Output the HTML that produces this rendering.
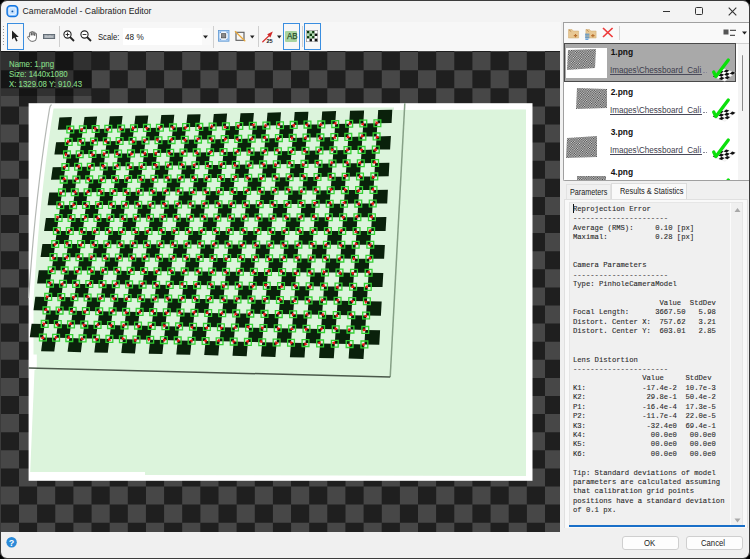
<!DOCTYPE html>
<html><head><meta charset="utf-8">
<style>
*{box-sizing:border-box}
html,body{margin:0;padding:0;width:750px;height:559px;overflow:hidden;background:#000}
body{position:relative;font-family:"Liberation Sans",sans-serif;font-size:12px;color:#1a1a1a}
.win{position:absolute;left:0;top:0;width:750px;height:559px;background:#f0f0f0;border:1px solid #3b3b3b;border-radius:7px;overflow:hidden}
.abs{position:absolute}
.title{position:absolute;left:0;top:0;width:748px;height:22px;background:#f3f3f3}
.tbar{position:absolute;left:1px;top:22px;width:560px;height:29px;background:#f7f7f7}
.sep{position:absolute;width:1px;background:#cfcfcf}
.selbtn{position:absolute;border:1px solid #3a8ee0}
.panel{position:absolute;left:562.8px;top:21.5px;width:186.5px;height:159.3px;border:1px solid #a0a0a0;border-right:none;border-bottom-left-radius:2px;background:#f0f0f0}
.report{position:absolute;left:572.9px;top:204.8px;margin:0;font-family:"Liberation Mono",monospace;font-size:7.22px;line-height:9.42px;color:#2a2a2a;white-space:pre;-webkit-text-stroke:0.1px #2a2a2a}
.btn{position:absolute;top:535.6px;height:14px;border:1px solid #cfcfcf;border-radius:3px;background:#fdfdfd}
</style></head><body>

<div class="win"><div class="title"></div></div>
<svg class="abs" style="left:5px;top:4px" width="14" height="14"><rect x="2.1" y="1.75" width="10.6" height="10.8" rx="3.4" fill="#a6d0ff" stroke="#1476e0" stroke-width="1.5"/><rect x="4" y="3.7" width="6.8" height="6.8" rx="1.6" fill="#c6e2ff" stroke="#eef7ff" stroke-width="0.9"/><circle cx="7.4" cy="7.4" r="0.95" fill="#0a4fa0"/></svg>
<div class="abs" style="left:22.60px;top:5.93px;font-family:'Liberation Sans';font-size:8.70px;line-height:normal;font-weight:normal;color:#1c1c1c;white-space:pre;">CameraModel - Calibration Editor</div>
<div class="abs" style="left:663px;top:10.6px;width:7.3px;height:1.1px;background:#333"></div>
<div class="abs" style="left:695px;top:7.2px;width:7.8px;height:7.6px;border:1.1px solid #333;border-radius:1.5px"></div>
<svg class="abs" style="left:728px;top:6.5px" width="9" height="9"><path d="M0.7 0.7L8.3 8.3M8.3 0.7L0.7 8.3" stroke="#333" stroke-width="1.1"/></svg>

<div class="tbar"></div>
<svg class="abs" style="left:2px;top:25px" width="4" height="24"><g fill="#9a9a9a"><rect x="1" y="1" width="1" height="1"/><rect x="1" y="4" width="1" height="1"/><rect x="1" y="7" width="1" height="1"/><rect x="1" y="10" width="1" height="1"/><rect x="1" y="13" width="1" height="1"/><rect x="1" y="16" width="1" height="1"/><rect x="1" y="19" width="1" height="1"/></g></svg>
<div class="selbtn" style="left:7px;top:23px;width:17px;height:27px"></div>
<svg class="abs" style="left:11px;top:30px" width="9" height="12"><path d="M1 0.5 L1 9.5 L3.3 7.6 L5.2 11.5 L6.6 10.8 L4.8 7.1 L7.8 7 Z" fill="#222"/></svg>
<svg class="abs" style="left:27px;top:30.6px" width="12" height="13"><path transform="scale(0.86)" d="M3 6 L3 2.5 Q3 1.5 4 1.5 Q5 1.5 5 2.5 L5 5 L5 1.5 Q5 .5 6 .5 Q7 .5 7 1.5 L7 5 L7 2 Q7 1 8 1 Q9 1 9 2 L9 5.5 L9 3.5 Q9 2.5 10 2.5 Q11 2.5 11 3.5 L11 8 Q11 12 7 12 L5.5 12 Q3.5 12 2 9.5 L0.8 7.5 Q0.5 6.5 1.5 6.3 Q2.3 6.2 3 7 Z" fill="#fff" stroke="#444" stroke-width="0.9"/></svg>
<svg class="abs" style="left:42.8px;top:33.8px" width="13" height="6"><rect x="0.45" y="0.45" width="11.2" height="4.1" fill="#9aa2aa" stroke="#5a646e" stroke-width="0.9"/><path d="M3 1.5v2.2M5 2.1v1.6M7 1.5v2.2M9 2.1v1.6" stroke="#eee" stroke-width="0.8"/></svg>
<div class="sep" style="left:59px;top:26px;height:21px"></div>
<svg class="abs" style="left:63px;top:30px" width="12" height="12"><circle cx="4.5" cy="4.5" r="3.6" fill="#fff" stroke="#222" stroke-width="1.1"/><path d="M7 7 L11 11" stroke="#222" stroke-width="1.8"/><path d="M2.6 4.5h3.8M4.5 2.6v3.8" stroke="#222" stroke-width="0.9"/></svg>
<svg class="abs" style="left:80px;top:30px" width="12" height="12"><circle cx="4.5" cy="4.5" r="3.6" fill="#fff" stroke="#222" stroke-width="1.1"/><path d="M7 7 L11 11" stroke="#222" stroke-width="1.8"/><path d="M2.6 4.5h3.8" stroke="#222" stroke-width="0.9"/></svg>
<div class="abs" style="left:97.50px;top:31.55px;font-family:'Liberation Sans';font-size:8.90px;line-height:normal;font-weight:normal;color:#1a1a1a;white-space:pre;transform:scaleX(0.865);transform-origin:0 0;">Scale:</div>
<div class="abs" style="left:122.5px;top:28.2px;width:88.2px;height:17.2px;background:#f9f9f9"></div><div class="abs" style="left:122.5px;top:28.2px;width:79.5px;height:17.2px;background:#fff"></div>
<div class="abs" style="left:124.50px;top:31.55px;font-family:'Liberation Sans';font-size:8.90px;line-height:normal;font-weight:normal;color:#1a1a1a;white-space:pre;transform:scaleX(0.922);transform-origin:0 0;">48 %</div>
<svg class="abs" style="left:203px;top:35px" width="6" height="4"><path d="M0 0.5h5l-2.5 3z" fill="#222"/></svg>
<div class="sep" style="left:213.2px;top:26px;height:21.5px"></div>
<svg class="abs" style="left:218px;top:30.2px" width="12" height="12"><rect x="0.4" y="0.4" width="10.6" height="10.8" fill="#b4d4f4" stroke="#5e98d4" stroke-width="0.8"/><rect x="1.8" y="1.8" width="7.8" height="8" fill="#f2f7fd"/><path d="M1.8 1.8h1.6l-1.6 1.6zM9.6 1.8h-1.6l1.6 1.6zM1.8 9.8h1.6l-1.6-1.6zM9.6 9.8h-1.6l1.6-1.6z" fill="#3a7fd0"/><rect x="3.6" y="3.7" width="4.2" height="4.2" fill="#8a8a8a" stroke="#3a3a3a" stroke-width="0.6"/></svg>
<svg class="abs" style="left:233.5px;top:30px" width="13" height="12"><rect x="2" y="2.3" width="8" height="8" fill="none" stroke="#5a5a5a" stroke-width="1.1"/><path d="M1 1.2 L11.3 11.3" stroke="#eaa83a" stroke-width="1.2"/></svg>
<svg class="abs" style="left:249.5px;top:35px" width="6" height="4"><path d="M0 0.5h4.5l-2.25 3z" fill="#222"/></svg>
<div class="sep" style="left:258px;top:26px;height:21px"></div>
<svg class="abs" style="left:262px;top:31px" width="13" height="12"><path d="M0.8 10.8 L8.2 3.6" stroke="#d83030" stroke-width="1.3" stroke-linecap="round"/><path d="M5.2 3.3 L10.8 0.6 L8.4 6.6 Z" fill="#d02828"/><text x="4.6" y="11.6" font-size="5.6" font-weight="bold" font-family="Liberation Sans" fill="#222" letter-spacing="-0.3">25</text></svg>
<svg class="abs" style="left:277px;top:35px" width="6" height="4"><path d="M0 0.5h4.5l-2.25 3z" fill="#222"/></svg>
<div class="selbtn" style="left:283px;top:23px;width:17px;height:27px"></div>
<div class="abs" style="left:285.2px;top:31.2px;width:12.2px;height:10.6px;background:#a8d4a0;border-radius:1px"></div>
<div class="abs" style="left:286.60px;top:31.15px;font-family:'Liberation Sans';font-size:9.00px;line-height:normal;font-weight:normal;color:#2a4f2a;white-space:pre;transform:scaleX(0.883);transform-origin:0 0;-webkit-text-stroke:0.25px #2a4f2a;">AB</div>
<div class="sep" style="left:302px;top:26px;height:21px"></div>
<div class="selbtn" style="left:304px;top:23px;width:17px;height:27px"></div>
<svg class="abs" style="left:306px;top:30px" width="12" height="12"><rect x="0.4" y="0.4" width="11.2" height="11.2" fill="#fff" stroke="#9a9a9a" stroke-width="0.8"/><rect x="1.00" y="1.00" width="2.6" height="2.6" fill="#0a3a0a"/><rect x="3.55" y="1.00" width="2.6" height="2.6" fill="#b0dcb0"/><rect x="6.10" y="1.00" width="2.6" height="2.6" fill="#0a3a0a"/><rect x="8.65" y="1.00" width="2.6" height="2.6" fill="#ffffff"/><rect x="1.00" y="3.55" width="2.6" height="2.6" fill="#b0dcb0"/><rect x="3.55" y="3.55" width="2.6" height="2.6" fill="#0a3a0a"/><rect x="6.10" y="3.55" width="2.6" height="2.6" fill="#b0dcb0"/><rect x="8.65" y="3.55" width="2.6" height="2.6" fill="#111111"/><rect x="1.00" y="6.10" width="2.6" height="2.6" fill="#0a3a0a"/><rect x="3.55" y="6.10" width="2.6" height="2.6" fill="#b0dcb0"/><rect x="6.10" y="6.10" width="2.6" height="2.6" fill="#0a3a0a"/><rect x="8.65" y="6.10" width="2.6" height="2.6" fill="#ffffff"/><rect x="1.00" y="8.65" width="2.6" height="2.6" fill="#ffffff"/><rect x="3.55" y="8.65" width="2.6" height="2.6" fill="#111111"/><rect x="6.10" y="8.65" width="2.6" height="2.6" fill="#ffffff"/><rect x="8.65" y="8.65" width="2.6" height="2.6" fill="#111111"/></svg>

<svg width="559" height="481" viewBox="1 51 559 481" style="position:absolute;left:1px;top:51px;display:block">
<rect x="1" y="51" width="560" height="481" fill="#1f1f1f"/>
<path fill="#474747" d="M-17.3 34h18.1v18.1h-18.1zM19 34h18.1v18.1h-18.1zM55.3 34h18.1v18.1h-18.1zM91.6 34h18.1v18.1h-18.1zM127.8 34h18.1v18.1h-18.1zM164.1 34h18.1v18.1h-18.1zM200.4 34h18.1v18.1h-18.1zM236.7 34h18.1v18.1h-18.1zM272.9 34h18.1v18.1h-18.1zM309.2 34h18.1v18.1h-18.1zM345.5 34h18.1v18.1h-18.1zM381.8 34h18.1v18.1h-18.1zM418 34h18.1v18.1h-18.1zM454.3 34h18.1v18.1h-18.1zM490.6 34h18.1v18.1h-18.1zM526.9 34h18.1v18.1h-18.1zM563.1 34h18.1v18.1h-18.1zM0.9 52.1h18.1v18.1h-18.1zM37.1 52.1h18.1v18.1h-18.1zM73.4 52.1h18.1v18.1h-18.1zM109.7 52.1h18.1v18.1h-18.1zM146 52.1h18.1v18.1h-18.1zM182.2 52.1h18.1v18.1h-18.1zM218.5 52.1h18.1v18.1h-18.1zM254.8 52.1h18.1v18.1h-18.1zM291.1 52.1h18.1v18.1h-18.1zM327.3 52.1h18.1v18.1h-18.1zM363.6 52.1h18.1v18.1h-18.1zM399.9 52.1h18.1v18.1h-18.1zM436.2 52.1h18.1v18.1h-18.1zM472.4 52.1h18.1v18.1h-18.1zM508.7 52.1h18.1v18.1h-18.1zM545 52.1h18.1v18.1h-18.1zM-17.3 70.2h18.1v18.1h-18.1zM19 70.2h18.1v18.1h-18.1zM55.3 70.2h18.1v18.1h-18.1zM91.6 70.2h18.1v18.1h-18.1zM127.8 70.2h18.1v18.1h-18.1zM164.1 70.2h18.1v18.1h-18.1zM200.4 70.2h18.1v18.1h-18.1zM236.7 70.2h18.1v18.1h-18.1zM272.9 70.2h18.1v18.1h-18.1zM309.2 70.2h18.1v18.1h-18.1zM345.5 70.2h18.1v18.1h-18.1zM381.8 70.2h18.1v18.1h-18.1zM418 70.2h18.1v18.1h-18.1zM454.3 70.2h18.1v18.1h-18.1zM490.6 70.2h18.1v18.1h-18.1zM526.9 70.2h18.1v18.1h-18.1zM563.1 70.2h18.1v18.1h-18.1zM0.9 88.3h18.1v18.1h-18.1zM37.1 88.3h18.1v18.1h-18.1zM73.4 88.3h18.1v18.1h-18.1zM109.7 88.3h18.1v18.1h-18.1zM146 88.3h18.1v18.1h-18.1zM182.2 88.3h18.1v18.1h-18.1zM218.5 88.3h18.1v18.1h-18.1zM254.8 88.3h18.1v18.1h-18.1zM291.1 88.3h18.1v18.1h-18.1zM327.3 88.3h18.1v18.1h-18.1zM363.6 88.3h18.1v18.1h-18.1zM399.9 88.3h18.1v18.1h-18.1zM436.2 88.3h18.1v18.1h-18.1zM472.4 88.3h18.1v18.1h-18.1zM508.7 88.3h18.1v18.1h-18.1zM545 88.3h18.1v18.1h-18.1zM-17.3 106.4h18.1v18.1h-18.1zM19 106.4h18.1v18.1h-18.1zM55.3 106.4h18.1v18.1h-18.1zM91.6 106.4h18.1v18.1h-18.1zM127.8 106.4h18.1v18.1h-18.1zM164.1 106.4h18.1v18.1h-18.1zM200.4 106.4h18.1v18.1h-18.1zM236.7 106.4h18.1v18.1h-18.1zM272.9 106.4h18.1v18.1h-18.1zM309.2 106.4h18.1v18.1h-18.1zM345.5 106.4h18.1v18.1h-18.1zM381.8 106.4h18.1v18.1h-18.1zM418 106.4h18.1v18.1h-18.1zM454.3 106.4h18.1v18.1h-18.1zM490.6 106.4h18.1v18.1h-18.1zM526.9 106.4h18.1v18.1h-18.1zM563.1 106.4h18.1v18.1h-18.1zM0.9 124.5h18.1v18.1h-18.1zM37.1 124.5h18.1v18.1h-18.1zM73.4 124.5h18.1v18.1h-18.1zM109.7 124.5h18.1v18.1h-18.1zM146 124.5h18.1v18.1h-18.1zM182.2 124.5h18.1v18.1h-18.1zM218.5 124.5h18.1v18.1h-18.1zM254.8 124.5h18.1v18.1h-18.1zM291.1 124.5h18.1v18.1h-18.1zM327.3 124.5h18.1v18.1h-18.1zM363.6 124.5h18.1v18.1h-18.1zM399.9 124.5h18.1v18.1h-18.1zM436.2 124.5h18.1v18.1h-18.1zM472.4 124.5h18.1v18.1h-18.1zM508.7 124.5h18.1v18.1h-18.1zM545 124.5h18.1v18.1h-18.1zM-17.3 142.6h18.1v18.1h-18.1zM19 142.6h18.1v18.1h-18.1zM55.3 142.6h18.1v18.1h-18.1zM91.6 142.6h18.1v18.1h-18.1zM127.8 142.6h18.1v18.1h-18.1zM164.1 142.6h18.1v18.1h-18.1zM200.4 142.6h18.1v18.1h-18.1zM236.7 142.6h18.1v18.1h-18.1zM272.9 142.6h18.1v18.1h-18.1zM309.2 142.6h18.1v18.1h-18.1zM345.5 142.6h18.1v18.1h-18.1zM381.8 142.6h18.1v18.1h-18.1zM418 142.6h18.1v18.1h-18.1zM454.3 142.6h18.1v18.1h-18.1zM490.6 142.6h18.1v18.1h-18.1zM526.9 142.6h18.1v18.1h-18.1zM563.1 142.6h18.1v18.1h-18.1zM0.9 160.7h18.1v18.1h-18.1zM37.1 160.7h18.1v18.1h-18.1zM73.4 160.7h18.1v18.1h-18.1zM109.7 160.7h18.1v18.1h-18.1zM146 160.7h18.1v18.1h-18.1zM182.2 160.7h18.1v18.1h-18.1zM218.5 160.7h18.1v18.1h-18.1zM254.8 160.7h18.1v18.1h-18.1zM291.1 160.7h18.1v18.1h-18.1zM327.3 160.7h18.1v18.1h-18.1zM363.6 160.7h18.1v18.1h-18.1zM399.9 160.7h18.1v18.1h-18.1zM436.2 160.7h18.1v18.1h-18.1zM472.4 160.7h18.1v18.1h-18.1zM508.7 160.7h18.1v18.1h-18.1zM545 160.7h18.1v18.1h-18.1zM-17.3 178.8h18.1v18.1h-18.1zM19 178.8h18.1v18.1h-18.1zM55.3 178.8h18.1v18.1h-18.1zM91.6 178.8h18.1v18.1h-18.1zM127.8 178.8h18.1v18.1h-18.1zM164.1 178.8h18.1v18.1h-18.1zM200.4 178.8h18.1v18.1h-18.1zM236.7 178.8h18.1v18.1h-18.1zM272.9 178.8h18.1v18.1h-18.1zM309.2 178.8h18.1v18.1h-18.1zM345.5 178.8h18.1v18.1h-18.1zM381.8 178.8h18.1v18.1h-18.1zM418 178.8h18.1v18.1h-18.1zM454.3 178.8h18.1v18.1h-18.1zM490.6 178.8h18.1v18.1h-18.1zM526.9 178.8h18.1v18.1h-18.1zM563.1 178.8h18.1v18.1h-18.1zM0.9 196.9h18.1v18.1h-18.1zM37.1 196.9h18.1v18.1h-18.1zM73.4 196.9h18.1v18.1h-18.1zM109.7 196.9h18.1v18.1h-18.1zM146 196.9h18.1v18.1h-18.1zM182.2 196.9h18.1v18.1h-18.1zM218.5 196.9h18.1v18.1h-18.1zM254.8 196.9h18.1v18.1h-18.1zM291.1 196.9h18.1v18.1h-18.1zM327.3 196.9h18.1v18.1h-18.1zM363.6 196.9h18.1v18.1h-18.1zM399.9 196.9h18.1v18.1h-18.1zM436.2 196.9h18.1v18.1h-18.1zM472.4 196.9h18.1v18.1h-18.1zM508.7 196.9h18.1v18.1h-18.1zM545 196.9h18.1v18.1h-18.1zM-17.3 215h18.1v18.1h-18.1zM19 215h18.1v18.1h-18.1zM55.3 215h18.1v18.1h-18.1zM91.6 215h18.1v18.1h-18.1zM127.8 215h18.1v18.1h-18.1zM164.1 215h18.1v18.1h-18.1zM200.4 215h18.1v18.1h-18.1zM236.7 215h18.1v18.1h-18.1zM272.9 215h18.1v18.1h-18.1zM309.2 215h18.1v18.1h-18.1zM345.5 215h18.1v18.1h-18.1zM381.8 215h18.1v18.1h-18.1zM418 215h18.1v18.1h-18.1zM454.3 215h18.1v18.1h-18.1zM490.6 215h18.1v18.1h-18.1zM526.9 215h18.1v18.1h-18.1zM563.1 215h18.1v18.1h-18.1zM0.9 233.1h18.1v18.1h-18.1zM37.1 233.1h18.1v18.1h-18.1zM73.4 233.1h18.1v18.1h-18.1zM109.7 233.1h18.1v18.1h-18.1zM146 233.1h18.1v18.1h-18.1zM182.2 233.1h18.1v18.1h-18.1zM218.5 233.1h18.1v18.1h-18.1zM254.8 233.1h18.1v18.1h-18.1zM291.1 233.1h18.1v18.1h-18.1zM327.3 233.1h18.1v18.1h-18.1zM363.6 233.1h18.1v18.1h-18.1zM399.9 233.1h18.1v18.1h-18.1zM436.2 233.1h18.1v18.1h-18.1zM472.4 233.1h18.1v18.1h-18.1zM508.7 233.1h18.1v18.1h-18.1zM545 233.1h18.1v18.1h-18.1zM-17.3 251.2h18.1v18.1h-18.1zM19 251.2h18.1v18.1h-18.1zM55.3 251.2h18.1v18.1h-18.1zM91.6 251.2h18.1v18.1h-18.1zM127.8 251.2h18.1v18.1h-18.1zM164.1 251.2h18.1v18.1h-18.1zM200.4 251.2h18.1v18.1h-18.1zM236.7 251.2h18.1v18.1h-18.1zM272.9 251.2h18.1v18.1h-18.1zM309.2 251.2h18.1v18.1h-18.1zM345.5 251.2h18.1v18.1h-18.1zM381.8 251.2h18.1v18.1h-18.1zM418 251.2h18.1v18.1h-18.1zM454.3 251.2h18.1v18.1h-18.1zM490.6 251.2h18.1v18.1h-18.1zM526.9 251.2h18.1v18.1h-18.1zM563.1 251.2h18.1v18.1h-18.1zM0.9 269.3h18.1v18.1h-18.1zM37.1 269.3h18.1v18.1h-18.1zM73.4 269.3h18.1v18.1h-18.1zM109.7 269.3h18.1v18.1h-18.1zM146 269.3h18.1v18.1h-18.1zM182.2 269.3h18.1v18.1h-18.1zM218.5 269.3h18.1v18.1h-18.1zM254.8 269.3h18.1v18.1h-18.1zM291.1 269.3h18.1v18.1h-18.1zM327.3 269.3h18.1v18.1h-18.1zM363.6 269.3h18.1v18.1h-18.1zM399.9 269.3h18.1v18.1h-18.1zM436.2 269.3h18.1v18.1h-18.1zM472.4 269.3h18.1v18.1h-18.1zM508.7 269.3h18.1v18.1h-18.1zM545 269.3h18.1v18.1h-18.1zM-17.3 287.4h18.1v18.1h-18.1zM19 287.4h18.1v18.1h-18.1zM55.3 287.4h18.1v18.1h-18.1zM91.6 287.4h18.1v18.1h-18.1zM127.8 287.4h18.1v18.1h-18.1zM164.1 287.4h18.1v18.1h-18.1zM200.4 287.4h18.1v18.1h-18.1zM236.7 287.4h18.1v18.1h-18.1zM272.9 287.4h18.1v18.1h-18.1zM309.2 287.4h18.1v18.1h-18.1zM345.5 287.4h18.1v18.1h-18.1zM381.8 287.4h18.1v18.1h-18.1zM418 287.4h18.1v18.1h-18.1zM454.3 287.4h18.1v18.1h-18.1zM490.6 287.4h18.1v18.1h-18.1zM526.9 287.4h18.1v18.1h-18.1zM563.1 287.4h18.1v18.1h-18.1zM0.9 305.5h18.1v18.1h-18.1zM37.1 305.5h18.1v18.1h-18.1zM73.4 305.5h18.1v18.1h-18.1zM109.7 305.5h18.1v18.1h-18.1zM146 305.5h18.1v18.1h-18.1zM182.2 305.5h18.1v18.1h-18.1zM218.5 305.5h18.1v18.1h-18.1zM254.8 305.5h18.1v18.1h-18.1zM291.1 305.5h18.1v18.1h-18.1zM327.3 305.5h18.1v18.1h-18.1zM363.6 305.5h18.1v18.1h-18.1zM399.9 305.5h18.1v18.1h-18.1zM436.2 305.5h18.1v18.1h-18.1zM472.4 305.5h18.1v18.1h-18.1zM508.7 305.5h18.1v18.1h-18.1zM545 305.5h18.1v18.1h-18.1zM-17.3 323.6h18.1v18.1h-18.1zM19 323.6h18.1v18.1h-18.1zM55.3 323.6h18.1v18.1h-18.1zM91.6 323.6h18.1v18.1h-18.1zM127.8 323.6h18.1v18.1h-18.1zM164.1 323.6h18.1v18.1h-18.1zM200.4 323.6h18.1v18.1h-18.1zM236.7 323.6h18.1v18.1h-18.1zM272.9 323.6h18.1v18.1h-18.1zM309.2 323.6h18.1v18.1h-18.1zM345.5 323.6h18.1v18.1h-18.1zM381.8 323.6h18.1v18.1h-18.1zM418 323.6h18.1v18.1h-18.1zM454.3 323.6h18.1v18.1h-18.1zM490.6 323.6h18.1v18.1h-18.1zM526.9 323.6h18.1v18.1h-18.1zM563.1 323.6h18.1v18.1h-18.1zM0.9 341.7h18.1v18.1h-18.1zM37.1 341.7h18.1v18.1h-18.1zM73.4 341.7h18.1v18.1h-18.1zM109.7 341.7h18.1v18.1h-18.1zM146 341.7h18.1v18.1h-18.1zM182.2 341.7h18.1v18.1h-18.1zM218.5 341.7h18.1v18.1h-18.1zM254.8 341.7h18.1v18.1h-18.1zM291.1 341.7h18.1v18.1h-18.1zM327.3 341.7h18.1v18.1h-18.1zM363.6 341.7h18.1v18.1h-18.1zM399.9 341.7h18.1v18.1h-18.1zM436.2 341.7h18.1v18.1h-18.1zM472.4 341.7h18.1v18.1h-18.1zM508.7 341.7h18.1v18.1h-18.1zM545 341.7h18.1v18.1h-18.1zM-17.3 359.8h18.1v18.1h-18.1zM19 359.8h18.1v18.1h-18.1zM55.3 359.8h18.1v18.1h-18.1zM91.6 359.8h18.1v18.1h-18.1zM127.8 359.8h18.1v18.1h-18.1zM164.1 359.8h18.1v18.1h-18.1zM200.4 359.8h18.1v18.1h-18.1zM236.7 359.8h18.1v18.1h-18.1zM272.9 359.8h18.1v18.1h-18.1zM309.2 359.8h18.1v18.1h-18.1zM345.5 359.8h18.1v18.1h-18.1zM381.8 359.8h18.1v18.1h-18.1zM418 359.8h18.1v18.1h-18.1zM454.3 359.8h18.1v18.1h-18.1zM490.6 359.8h18.1v18.1h-18.1zM526.9 359.8h18.1v18.1h-18.1zM563.1 359.8h18.1v18.1h-18.1zM0.9 377.9h18.1v18.1h-18.1zM37.1 377.9h18.1v18.1h-18.1zM73.4 377.9h18.1v18.1h-18.1zM109.7 377.9h18.1v18.1h-18.1zM146 377.9h18.1v18.1h-18.1zM182.2 377.9h18.1v18.1h-18.1zM218.5 377.9h18.1v18.1h-18.1zM254.8 377.9h18.1v18.1h-18.1zM291.1 377.9h18.1v18.1h-18.1zM327.3 377.9h18.1v18.1h-18.1zM363.6 377.9h18.1v18.1h-18.1zM399.9 377.9h18.1v18.1h-18.1zM436.2 377.9h18.1v18.1h-18.1zM472.4 377.9h18.1v18.1h-18.1zM508.7 377.9h18.1v18.1h-18.1zM545 377.9h18.1v18.1h-18.1zM-17.3 396h18.1v18.1h-18.1zM19 396h18.1v18.1h-18.1zM55.3 396h18.1v18.1h-18.1zM91.6 396h18.1v18.1h-18.1zM127.8 396h18.1v18.1h-18.1zM164.1 396h18.1v18.1h-18.1zM200.4 396h18.1v18.1h-18.1zM236.7 396h18.1v18.1h-18.1zM272.9 396h18.1v18.1h-18.1zM309.2 396h18.1v18.1h-18.1zM345.5 396h18.1v18.1h-18.1zM381.8 396h18.1v18.1h-18.1zM418 396h18.1v18.1h-18.1zM454.3 396h18.1v18.1h-18.1zM490.6 396h18.1v18.1h-18.1zM526.9 396h18.1v18.1h-18.1zM563.1 396h18.1v18.1h-18.1zM0.9 414.1h18.1v18.1h-18.1zM37.1 414.1h18.1v18.1h-18.1zM73.4 414.1h18.1v18.1h-18.1zM109.7 414.1h18.1v18.1h-18.1zM146 414.1h18.1v18.1h-18.1zM182.2 414.1h18.1v18.1h-18.1zM218.5 414.1h18.1v18.1h-18.1zM254.8 414.1h18.1v18.1h-18.1zM291.1 414.1h18.1v18.1h-18.1zM327.3 414.1h18.1v18.1h-18.1zM363.6 414.1h18.1v18.1h-18.1zM399.9 414.1h18.1v18.1h-18.1zM436.2 414.1h18.1v18.1h-18.1zM472.4 414.1h18.1v18.1h-18.1zM508.7 414.1h18.1v18.1h-18.1zM545 414.1h18.1v18.1h-18.1zM-17.3 432.2h18.1v18.1h-18.1zM19 432.2h18.1v18.1h-18.1zM55.3 432.2h18.1v18.1h-18.1zM91.6 432.2h18.1v18.1h-18.1zM127.8 432.2h18.1v18.1h-18.1zM164.1 432.2h18.1v18.1h-18.1zM200.4 432.2h18.1v18.1h-18.1zM236.7 432.2h18.1v18.1h-18.1zM272.9 432.2h18.1v18.1h-18.1zM309.2 432.2h18.1v18.1h-18.1zM345.5 432.2h18.1v18.1h-18.1zM381.8 432.2h18.1v18.1h-18.1zM418 432.2h18.1v18.1h-18.1zM454.3 432.2h18.1v18.1h-18.1zM490.6 432.2h18.1v18.1h-18.1zM526.9 432.2h18.1v18.1h-18.1zM563.1 432.2h18.1v18.1h-18.1zM0.9 450.3h18.1v18.1h-18.1zM37.1 450.3h18.1v18.1h-18.1zM73.4 450.3h18.1v18.1h-18.1zM109.7 450.3h18.1v18.1h-18.1zM146 450.3h18.1v18.1h-18.1zM182.2 450.3h18.1v18.1h-18.1zM218.5 450.3h18.1v18.1h-18.1zM254.8 450.3h18.1v18.1h-18.1zM291.1 450.3h18.1v18.1h-18.1zM327.3 450.3h18.1v18.1h-18.1zM363.6 450.3h18.1v18.1h-18.1zM399.9 450.3h18.1v18.1h-18.1zM436.2 450.3h18.1v18.1h-18.1zM472.4 450.3h18.1v18.1h-18.1zM508.7 450.3h18.1v18.1h-18.1zM545 450.3h18.1v18.1h-18.1zM-17.3 468.4h18.1v18.1h-18.1zM19 468.4h18.1v18.1h-18.1zM55.3 468.4h18.1v18.1h-18.1zM91.6 468.4h18.1v18.1h-18.1zM127.8 468.4h18.1v18.1h-18.1zM164.1 468.4h18.1v18.1h-18.1zM200.4 468.4h18.1v18.1h-18.1zM236.7 468.4h18.1v18.1h-18.1zM272.9 468.4h18.1v18.1h-18.1zM309.2 468.4h18.1v18.1h-18.1zM345.5 468.4h18.1v18.1h-18.1zM381.8 468.4h18.1v18.1h-18.1zM418 468.4h18.1v18.1h-18.1zM454.3 468.4h18.1v18.1h-18.1zM490.6 468.4h18.1v18.1h-18.1zM526.9 468.4h18.1v18.1h-18.1zM563.1 468.4h18.1v18.1h-18.1zM0.9 486.5h18.1v18.1h-18.1zM37.1 486.5h18.1v18.1h-18.1zM73.4 486.5h18.1v18.1h-18.1zM109.7 486.5h18.1v18.1h-18.1zM146 486.5h18.1v18.1h-18.1zM182.2 486.5h18.1v18.1h-18.1zM218.5 486.5h18.1v18.1h-18.1zM254.8 486.5h18.1v18.1h-18.1zM291.1 486.5h18.1v18.1h-18.1zM327.3 486.5h18.1v18.1h-18.1zM363.6 486.5h18.1v18.1h-18.1zM399.9 486.5h18.1v18.1h-18.1zM436.2 486.5h18.1v18.1h-18.1zM472.4 486.5h18.1v18.1h-18.1zM508.7 486.5h18.1v18.1h-18.1zM545 486.5h18.1v18.1h-18.1zM-17.3 504.6h18.1v18.1h-18.1zM19 504.6h18.1v18.1h-18.1zM55.3 504.6h18.1v18.1h-18.1zM91.6 504.6h18.1v18.1h-18.1zM127.8 504.6h18.1v18.1h-18.1zM164.1 504.6h18.1v18.1h-18.1zM200.4 504.6h18.1v18.1h-18.1zM236.7 504.6h18.1v18.1h-18.1zM272.9 504.6h18.1v18.1h-18.1zM309.2 504.6h18.1v18.1h-18.1zM345.5 504.6h18.1v18.1h-18.1zM381.8 504.6h18.1v18.1h-18.1zM418 504.6h18.1v18.1h-18.1zM454.3 504.6h18.1v18.1h-18.1zM490.6 504.6h18.1v18.1h-18.1zM526.9 504.6h18.1v18.1h-18.1zM563.1 504.6h18.1v18.1h-18.1zM0.9 522.7h18.1v18.1h-18.1zM37.1 522.7h18.1v18.1h-18.1zM73.4 522.7h18.1v18.1h-18.1zM109.7 522.7h18.1v18.1h-18.1zM146 522.7h18.1v18.1h-18.1zM182.2 522.7h18.1v18.1h-18.1zM218.5 522.7h18.1v18.1h-18.1zM254.8 522.7h18.1v18.1h-18.1zM291.1 522.7h18.1v18.1h-18.1zM327.3 522.7h18.1v18.1h-18.1zM363.6 522.7h18.1v18.1h-18.1zM399.9 522.7h18.1v18.1h-18.1zM436.2 522.7h18.1v18.1h-18.1zM472.4 522.7h18.1v18.1h-18.1zM508.7 522.7h18.1v18.1h-18.1zM545 522.7h18.1v18.1h-18.1zM-17.3 540.8h18.1v18.1h-18.1zM19 540.8h18.1v18.1h-18.1zM55.3 540.8h18.1v18.1h-18.1zM91.6 540.8h18.1v18.1h-18.1zM127.8 540.8h18.1v18.1h-18.1zM164.1 540.8h18.1v18.1h-18.1zM200.4 540.8h18.1v18.1h-18.1zM236.7 540.8h18.1v18.1h-18.1zM272.9 540.8h18.1v18.1h-18.1zM309.2 540.8h18.1v18.1h-18.1zM345.5 540.8h18.1v18.1h-18.1zM381.8 540.8h18.1v18.1h-18.1zM418 540.8h18.1v18.1h-18.1zM454.3 540.8h18.1v18.1h-18.1zM490.6 540.8h18.1v18.1h-18.1zM526.9 540.8h18.1v18.1h-18.1zM563.1 540.8h18.1v18.1h-18.1z"/>
<rect x="1" y="51" width="91" height="45" fill="#000" fill-opacity="0.3"/>
<rect x="28.6" y="103.2" width="503.9" height="377.6" fill="#fff"/>
<path fill="#dcf4dc" d="M53.5 108.5 L394 107.5 L394 110 L526 109.5 L526 476 L145 475 L145 472 L30.2 472 L34.5 370 L36.8 369 L36.8 354.5 L33.5 354.5 L33.5 300 Q40 192 53.5 108.5 Z"/>
<path fill="none" stroke="#b4b8b4" stroke-width="1.2" d="M51.5 104.5 Q49.8 106 49.5 109 Q36 190 28.6 298"/>
<path fill="none" stroke="#86a086" stroke-width="1.5" d="M404.8 103.2 L390.2 377"/>
<path fill="none" stroke="#4a584a" stroke-width="1.5" d="M28.6 368 L390.2 377"/>
<path fill="#0a210b" d="M59.4 117.4 L71.9 117.1 L70.3 129.5 L57.8 129.8ZM84.5 116.9 L97.1 116.6 L95.6 129 L82.9 129.2ZM109.8 116.3 L122.6 116 L121.1 128.5 L108.3 128.7ZM135.4 115.7 L148.3 115.4 L146.9 127.9 L134 128.2ZM161.3 115.1 L174.3 114.8 L173 127.4 L159.9 127.7ZM187.4 114.5 L200.6 114.2 L199.3 126.9 L186.1 127.1ZM213.8 113.9 L227.1 113.6 L225.9 126.3 L212.6 126.6ZM240.5 113.3 L253.9 113 L252.8 125.8 L239.3 126ZM267.5 112.7 L281 112.3 L280 125.2 L266.4 125.5ZM294.7 112 L308.4 111.7 L307.5 124.6 L293.7 124.9ZM322.2 111.4 L336.1 111.1 L335.2 124.1 L321.3 124.4ZM350 110.8 L364.1 110.4 L363.3 123.5 L349.2 123.8ZM378.2 110.1 L392.3 109.8 L391.6 122.9 L377.4 123.2ZM70.3 129.5 L82.9 129.2 L81.3 141.7 L68.7 141.9ZM95.6 129 L108.3 128.7 L106.8 141.2 L94 141.5ZM121.1 128.5 L134 128.2 L132.5 140.8 L119.6 141ZM146.9 127.9 L159.9 127.7 L158.5 140.3 L145.5 140.5ZM173 127.4 L186.1 127.1 L184.8 139.8 L171.6 140.1ZM199.3 126.9 L212.6 126.6 L211.3 139.4 L198 139.6ZM225.9 126.3 L239.3 126 L238.2 138.9 L224.7 139.1ZM252.8 125.8 L266.4 125.5 L265.3 138.4 L251.7 138.6ZM280 125.2 L293.7 124.9 L292.7 137.9 L278.9 138.1ZM307.5 124.6 L321.3 124.4 L320.4 137.4 L306.5 137.6ZM335.2 124.1 L349.2 123.8 L348.3 136.9 L334.3 137.1ZM363.3 123.5 L377.4 123.2 L376.6 136.4 L362.4 136.6ZM56.1 142.2 L68.7 141.9 L67 154.4 L54.4 154.6ZM81.3 141.7 L94 141.5 L92.4 154 L79.7 154.2ZM106.8 141.2 L119.6 141 L118.1 153.6 L105.2 153.8ZM132.5 140.8 L145.5 140.5 L144 153.2 L131 153.4ZM158.5 140.3 L171.6 140.1 L170.2 152.8 L157.1 153ZM184.8 139.8 L198 139.6 L196.7 152.4 L183.5 152.6ZM211.3 139.4 L224.7 139.1 L223.5 152 L210.1 152.2ZM238.2 138.9 L251.7 138.6 L250.5 151.6 L237 151.8ZM265.3 138.4 L278.9 138.1 L277.9 151.2 L264.2 151.4ZM292.7 137.9 L306.5 137.6 L305.5 150.7 L291.6 150.9ZM320.4 137.4 L334.3 137.1 L333.4 150.3 L319.4 150.5ZM348.3 136.9 L362.4 136.6 L361.6 149.9 L347.5 150.1ZM376.6 136.4 L390.9 136.1 L390.1 149.4 L375.8 149.6ZM67 154.4 L79.7 154.2 L78.1 166.8 L65.4 167ZM92.4 154 L105.2 153.8 L103.7 166.5 L90.8 166.7ZM118.1 153.6 L131 153.4 L129.6 166.2 L116.6 166.3ZM144 153.2 L157.1 153 L155.7 165.8 L142.6 166ZM170.2 152.8 L183.5 152.6 L182.1 165.5 L168.9 165.6ZM196.7 152.4 L210.1 152.2 L208.8 165.1 L195.4 165.3ZM223.5 152 L237 151.8 L235.8 164.8 L222.3 165ZM250.5 151.6 L264.2 151.4 L263.1 164.4 L249.4 164.6ZM277.9 151.2 L291.6 150.9 L290.6 164.1 L276.8 164.2ZM305.5 150.7 L319.4 150.5 L318.5 163.7 L304.5 163.9ZM333.4 150.3 L347.5 150.1 L346.6 163.3 L332.5 163.5ZM361.6 149.9 L375.8 149.6 L375.1 163 L360.8 163.2ZM52.7 167.2 L65.4 167 L63.7 179.6 L51 179.8ZM78.1 166.8 L90.8 166.7 L89.2 179.4 L76.4 179.5ZM103.7 166.5 L116.6 166.3 L115.1 179.1 L102.1 179.2ZM129.6 166.2 L142.6 166 L141.1 178.8 L128.1 179ZM155.7 165.8 L168.9 165.6 L167.5 178.6 L154.3 178.7ZM182.1 165.5 L195.4 165.3 L194.1 178.3 L180.8 178.4ZM208.8 165.1 L222.3 165 L221 178 L207.5 178.1ZM235.8 164.8 L249.4 164.6 L248.2 177.7 L234.6 177.9ZM263.1 164.4 L276.8 164.2 L275.7 177.4 L261.9 177.6ZM290.6 164.1 L304.5 163.9 L303.5 177.1 L289.6 177.3ZM318.5 163.7 L332.5 163.5 L331.6 176.8 L317.5 177ZM346.6 163.3 L360.8 163.2 L360 176.5 L345.7 176.7ZM375.1 163 L389.4 162.8 L388.7 176.2 L374.3 176.4ZM63.7 179.6 L76.4 179.5 L74.8 192.3 L62 192.4ZM89.2 179.4 L102.1 179.2 L100.5 192.1 L87.6 192.2ZM115.1 179.1 L128.1 179 L126.6 191.9 L113.5 192ZM141.1 178.8 L154.3 178.7 L152.8 191.6 L139.7 191.8ZM167.5 178.6 L180.8 178.4 L179.4 191.4 L166.1 191.5ZM194.1 178.3 L207.5 178.1 L206.3 191.2 L192.8 191.3ZM221 178 L234.6 177.9 L233.4 191 L219.8 191.1ZM248.2 177.7 L261.9 177.6 L260.8 190.8 L247.1 190.9ZM275.7 177.4 L289.6 177.3 L288.5 190.6 L274.6 190.7ZM303.5 177.1 L317.5 177 L316.5 190.4 L302.5 190.5ZM331.6 176.8 L345.7 176.7 L344.9 190.1 L330.7 190.2ZM360 176.5 L374.3 176.4 L373.5 189.9 L359.1 190ZM49.3 192.5 L62 192.4 L60.3 205.2 L47.6 205.2ZM74.8 192.3 L87.6 192.2 L86 205 L73.1 205.1ZM100.5 192.1 L113.5 192 L112 204.9 L99 205ZM126.6 191.9 L139.7 191.8 L138.2 204.7 L125 204.8ZM152.8 191.6 L166.1 191.5 L164.7 204.6 L151.4 204.7ZM179.4 191.4 L192.8 191.3 L191.5 204.5 L178 204.5ZM206.3 191.2 L219.8 191.1 L218.5 204.3 L205 204.4ZM233.4 191 L247.1 190.9 L245.9 204.2 L232.2 204.2ZM260.8 190.8 L274.6 190.7 L273.5 204 L259.7 204.1ZM288.5 190.6 L302.5 190.5 L301.5 203.9 L287.5 204ZM316.5 190.4 L330.7 190.2 L329.7 203.7 L315.6 203.8ZM344.9 190.1 L359.1 190 L358.3 203.6 L344 203.7ZM373.5 189.9 L387.9 189.8 L387.2 203.4 L372.7 203.5ZM60.3 205.2 L73.1 205.1 L71.5 218 L58.6 218ZM86 205 L99 205 L97.4 217.9 L84.4 218ZM112 204.9 L125 204.8 L123.5 217.9 L110.4 217.9ZM138.2 204.7 L151.4 204.7 L150 217.8 L136.7 217.8ZM164.7 204.6 L178 204.5 L176.7 217.7 L163.3 217.8ZM191.5 204.5 L205 204.4 L203.7 217.6 L190.1 217.7ZM218.5 204.3 L232.2 204.2 L231 217.6 L217.3 217.6ZM245.9 204.2 L259.7 204.1 L258.5 217.5 L244.7 217.5ZM273.5 204 L287.5 204 L286.4 217.4 L272.4 217.5ZM301.5 203.9 L315.6 203.8 L314.6 217.3 L300.5 217.4ZM329.7 203.7 L344 203.7 L343.1 217.3 L328.8 217.3ZM358.3 203.6 L372.7 203.5 L371.9 217.2 L357.4 217.2ZM45.9 218.1 L58.6 218 L56.9 231 L44.1 231ZM71.5 218 L84.4 218 L82.8 231 L69.8 231ZM97.4 217.9 L110.4 217.9 L108.8 231 L95.8 231ZM123.5 217.9 L136.7 217.8 L135.2 231 L122 231ZM150 217.8 L163.3 217.8 L161.9 231 L148.5 231ZM176.7 217.7 L190.1 217.7 L188.8 231 L175.3 231ZM203.7 217.6 L217.3 217.6 L216 231 L202.4 231ZM231 217.6 L244.7 217.5 L243.5 231 L229.7 231ZM258.5 217.5 L272.4 217.5 L271.3 231 L257.4 231ZM286.4 217.4 L300.5 217.4 L299.4 231 L285.3 231ZM314.6 217.3 L328.8 217.3 L327.9 231 L313.6 231ZM343.1 217.3 L357.4 217.2 L356.6 231 L342.2 231ZM371.9 217.2 L386.4 217.1 L385.6 231 L371.1 231ZM56.9 231 L69.8 231 L68.1 244.1 L55.2 244ZM82.8 231 L95.8 231 L94.2 244.1 L81.1 244.1ZM108.8 231 L122 231 L120.5 244.2 L107.3 244.2ZM135.2 231 L148.5 231 L147 244.3 L133.7 244.2ZM161.9 231 L175.3 231 L173.9 244.3 L160.4 244.3ZM188.8 231 L202.4 231 L201 244.4 L187.4 244.4ZM216 231 L229.7 231 L228.5 244.5 L214.7 244.4ZM243.5 231 L257.4 231 L256.2 244.5 L242.3 244.5ZM271.3 231 L285.3 231 L284.3 244.6 L270.2 244.6ZM299.4 231 L313.6 231 L312.6 244.7 L298.4 244.6ZM327.9 231 L342.2 231 L341.3 244.7 L326.9 244.7ZM356.6 231 L371.1 231 L370.3 244.8 L355.7 244.8ZM42.4 244 L55.2 244 L53.5 257.1 L40.6 257.1ZM68.1 244.1 L81.1 244.1 L79.4 257.3 L66.4 257.2ZM94.2 244.1 L107.3 244.2 L105.7 257.4 L92.5 257.3ZM120.5 244.2 L133.7 244.2 L132.2 257.5 L118.9 257.5ZM147 244.3 L160.4 244.3 L159 257.7 L145.6 257.6ZM173.9 244.3 L187.4 244.4 L186.1 257.8 L172.5 257.7ZM201 244.4 L214.7 244.4 L213.4 258 L199.7 257.9ZM228.5 244.5 L242.3 244.5 L241.1 258.1 L227.2 258ZM256.2 244.5 L270.2 244.6 L269.1 258.3 L255.1 258.2ZM284.3 244.6 L298.4 244.6 L297.4 258.4 L283.2 258.3ZM312.6 244.7 L326.9 244.7 L326 258.5 L311.6 258.5ZM341.3 244.7 L355.7 244.8 L354.9 258.7 L340.4 258.6ZM370.3 244.8 L384.9 244.9 L384.1 258.8 L369.4 258.8ZM53.5 257.1 L66.4 257.2 L64.7 270.4 L51.7 270.3ZM79.4 257.3 L92.5 257.3 L90.9 270.6 L77.8 270.5ZM105.7 257.4 L118.9 257.5 L117.3 270.8 L104.1 270.7ZM132.2 257.5 L145.6 257.6 L144.1 271 L130.7 270.9ZM159 257.7 L172.5 257.7 L171.1 271.3 L157.5 271.2ZM186.1 257.8 L199.7 257.9 L198.4 271.5 L184.7 271.4ZM213.4 258 L227.2 258 L226 271.7 L212.2 271.6ZM241.1 258.1 L255.1 258.2 L253.9 271.9 L239.9 271.8ZM269.1 258.3 L283.2 258.3 L282.1 272.1 L268 272ZM297.4 258.4 L311.6 258.5 L310.6 272.4 L296.3 272.2ZM326 258.5 L340.4 258.6 L339.5 272.6 L325 272.5ZM354.9 258.7 L369.4 258.8 L368.6 272.8 L354 272.7ZM38.8 270.2 L51.7 270.3 L50 283.6 L37.1 283.5ZM64.7 270.4 L77.8 270.5 L76.1 283.9 L63 283.7ZM90.9 270.6 L104.1 270.7 L102.5 284.1 L89.3 284ZM117.3 270.8 L130.7 270.9 L129.1 284.4 L115.8 284.3ZM144.1 271 L157.5 271.2 L156.1 284.7 L142.6 284.6ZM171.1 271.3 L184.7 271.4 L183.3 285 L169.7 284.9ZM198.4 271.5 L212.2 271.6 L210.9 285.3 L197.1 285.1ZM226 271.7 L239.9 271.8 L238.7 285.6 L224.7 285.4ZM253.9 271.9 L268 272 L266.8 285.9 L252.7 285.7ZM282.1 272.1 L296.3 272.2 L295.3 286.2 L281 286ZM310.6 272.4 L325 272.5 L324 286.5 L309.6 286.3ZM339.5 272.6 L354 272.7 L353.1 286.8 L338.5 286.6ZM368.6 272.8 L383.3 272.9 L382.5 287.1 L367.8 286.9ZM50 283.6 L63 283.7 L61.3 297.1 L48.2 296.9ZM76.1 283.9 L89.3 284 L87.6 297.5 L74.4 297.3ZM102.5 284.1 L115.8 284.3 L114.2 297.8 L100.9 297.6ZM129.1 284.4 L142.6 284.6 L141.1 298.2 L127.6 298ZM156.1 284.7 L169.7 284.9 L168.2 298.5 L154.6 298.4ZM183.3 285 L197.1 285.1 L195.7 298.9 L181.9 298.7ZM210.9 285.3 L224.7 285.4 L223.5 299.3 L209.5 299.1ZM238.7 285.6 L252.7 285.7 L251.5 299.6 L237.5 299.5ZM266.8 285.9 L281 286 L279.9 300 L265.7 299.8ZM295.3 286.2 L309.6 286.3 L308.6 300.4 L294.2 300.2ZM324 286.5 L338.5 286.6 L337.6 300.8 L323.1 300.6ZM353.1 286.8 L367.8 286.9 L366.9 301.2 L352.2 301ZM35.3 296.8 L48.2 296.9 L46.5 310.4 L33.5 310.2ZM61.3 297.1 L74.4 297.3 L72.7 310.8 L59.6 310.6ZM87.6 297.5 L100.9 297.6 L99.2 311.2 L85.9 311ZM114.2 297.8 L127.6 298 L126.1 311.7 L112.6 311.4ZM141.1 298.2 L154.6 298.4 L153.2 312.1 L139.6 311.9ZM168.2 298.5 L181.9 298.7 L180.5 312.5 L166.8 312.3ZM195.7 298.9 L209.5 299.1 L208.2 313 L194.4 312.7ZM223.5 299.3 L237.5 299.5 L236.2 313.4 L222.2 313.2ZM251.5 299.6 L265.7 299.8 L264.5 313.9 L250.3 313.6ZM279.9 300 L294.2 300.2 L293.1 314.3 L278.8 314.1ZM308.6 300.4 L323.1 300.6 L322.1 314.8 L307.6 314.5ZM337.6 300.8 L352.2 301 L351.3 315.2 L336.7 315ZM366.9 301.2 L381.7 301.4 L380.9 315.7 L366.1 315.5ZM46.5 310.4 L59.6 310.6 L57.8 324.1 L44.7 323.9ZM72.7 310.8 L85.9 311 L84.3 324.6 L71 324.4ZM99.2 311.2 L112.6 311.4 L111 325.1 L97.6 324.9ZM126.1 311.7 L139.6 311.9 L138 325.6 L124.5 325.4ZM153.2 312.1 L166.8 312.3 L165.4 326.2 L151.7 325.9ZM180.5 312.5 L194.4 312.7 L193 326.7 L179.1 326.4ZM208.2 313 L222.2 313.2 L220.9 327.2 L206.9 326.9ZM236.2 313.4 L250.3 313.6 L249.1 327.7 L235 327.5ZM264.5 313.9 L278.8 314.1 L277.7 328.3 L263.4 328ZM293.1 314.3 L307.6 314.5 L306.5 328.8 L292.1 328.5ZM322.1 314.8 L336.7 315 L335.7 329.3 L321.1 329.1ZM351.3 315.2 L366.1 315.5 L365.3 329.9 L350.5 329.6ZM31.6 323.7 L44.7 323.9 L42.9 337.5 L29.8 337.2ZM57.8 324.1 L71 324.4 L69.3 338.1 L56.1 337.8ZM84.3 324.6 L97.6 324.9 L96 338.6 L82.6 338.4ZM111 325.1 L124.5 325.4 L122.9 339.2 L109.4 338.9ZM138 325.6 L151.7 325.9 L150.2 339.8 L136.5 339.5ZM165.4 326.2 L179.1 326.4 L177.7 340.4 L163.9 340.1ZM193 326.7 L206.9 326.9 L205.6 341 L191.6 340.7ZM220.9 327.2 L235 327.5 L233.7 341.6 L219.6 341.3ZM249.1 327.7 L263.4 328 L262.2 342.2 L247.9 341.9ZM277.7 328.3 L292.1 328.5 L291 342.8 L276.6 342.5ZM306.5 328.8 L321.1 329.1 L320.1 343.4 L305.5 343.1ZM335.7 329.3 L350.5 329.6 L349.6 344.1 L334.8 343.8ZM365.3 329.9 L380.1 330.2 L379.3 344.7 L364.4 344.4ZM42.9 337.5 L56.1 337.8 L54.3 351.5 L41.1 351.2ZM69.3 338.1 L82.6 338.4 L80.9 352.2 L67.6 351.8ZM96 338.6 L109.4 338.9 L107.8 352.8 L94.3 352.5ZM122.9 339.2 L136.5 339.5 L135 353.5 L121.3 353.1ZM150.2 339.8 L163.9 340.1 L162.4 354.1 L148.7 353.8ZM177.7 340.4 L191.6 340.7 L190.2 354.8 L176.3 354.5ZM205.6 341 L219.6 341.3 L218.3 355.5 L204.2 355.1ZM233.7 341.6 L247.9 341.9 L246.7 356.2 L232.5 355.8ZM262.2 342.2 L276.6 342.5 L275.4 356.9 L261 356.5ZM291 342.8 L305.5 343.1 L304.5 357.6 L289.9 357.2ZM320.1 343.4 L334.8 343.8 L333.8 358.3 L319.1 357.9ZM349.6 344.1 L364.4 344.4 L363.5 359 L348.6 358.6Z"/>
<path fill="#ee1515" d="M67.7 129.9L71.6 130L69.8 126.6ZM82 131.6L83.6 128.1L79.8 128.4ZM97.4 127.9L93.6 127L94.7 130.7ZM106 128.3L108.1 131.6L109.9 128.2ZM123 129.3L119.7 127.3L119.5 131.1ZM135.4 128.2L132.1 126.1L131.9 129.9ZM146.6 130.6L148.7 127.3L144.9 127.1ZM159.7 129.9L161.8 126.6L158 126.4ZM172.8 129.8L174.8 126.5L171 126.3ZM184.4 125.8L184.7 129.7L187.9 127.6ZM198.1 129.1L201.7 127.5L198.6 125.2ZM211.2 124.3L210.4 128.1L214 127ZM223.3 128.5L227.2 128L224.9 124.9ZM238.4 128.2L240.3 124.8L236.5 124.8ZM255 123.3L251.3 124.6L254.1 127.1ZM264.3 127.3L267.9 125.9L264.9 123.5ZM280.1 122.7L276.8 124.8L280.2 126.6ZM294.5 127.4L295.3 123.6L291.6 124.8ZM308.4 123L304.8 124.6L307.9 126.8ZM323 125.3L320.4 122.4L319.2 126ZM336.5 121.3L333.2 123.5L336.6 125.2ZM349.5 121.4L347.8 124.9L351.6 124.6ZM360.7 124.2L364.1 126L364 122.2ZM375.5 121L375.6 124.9L378.8 123ZM66.2 143L70.1 142.4L67.8 139.4ZM81.1 143.6L82.1 139.9L78.4 140.7ZM95.2 139.9L91.3 140L93.3 143.3ZM103.8 141.5L107.3 143.2L107.1 139.4ZM117 140.9L120.1 143.2L120.6 139.4ZM135.3 141.4L131.8 139.6L131.9 143.4ZM143.2 138.9L144.5 142.6L147 139.7ZM155.3 138.7L157.4 142L159.2 138.6ZM169.2 140.1L173 141L172 137.3ZM182.9 140L186.2 141.9L186.3 138.1ZM197.3 141.3L200 138.6L196.4 137.6ZM212.3 141.5L212.5 137.6L209.1 139.3ZM224.7 141.4L227.4 138.5L223.7 137.6ZM238.7 137.4L235.1 138.9L238.1 141.2ZM253.4 140.3L252.3 136.6L249.7 139.3ZM265.8 135.5L262.9 138.2L266.5 139.4ZM280.6 138.8L277.6 136.3L276.9 140.1ZM291.6 140.1L294 136.9L290.2 136.4ZM303.3 137.9L306.9 139.5L306.5 135.7ZM318.4 139.4L322.2 138.7L319.8 135.7ZM335.1 135.2L332.5 138.1L336.2 138.9ZM347.5 134.9L346.4 138.6L350.1 137.8ZM364.4 136.6L361.5 134.1L360.7 137.8ZM375.5 138.9L379.2 137.7L376.4 135.1ZM64.9 156.5L68.1 154.4L64.8 152.6ZM78.3 156.9L81.8 155.1L78.6 153ZM94.8 154.5L91.4 152.6L91.4 156.4ZM103.7 156L106.3 153.1L102.6 152.2ZM117.2 151.7L115.3 155.1L119.1 155.1ZM130.4 155.9L133.7 153.8L130.3 152ZM146.1 151.8L142.5 153.1L145.3 155.6ZM153.7 152.4L156.3 155.3L157.5 151.7ZM171.3 152L167.4 152.3L169.5 155.5ZM184.8 151.2L180.9 151.8L183.3 154.8ZM194.7 153.6L198.5 154.2L197.3 150.6ZM210.5 154.5L212.5 151.1L208.7 151.1ZM223.2 149.3L220.6 152.1L224.3 153ZM238.8 153.2L237.8 149.5L235.1 152.1ZM248.2 149.9L248.4 153.8L251.6 151.8ZM266.3 149.9L262.5 150.5L264.8 153.5ZM275.2 150.3L278.6 152.3L278.6 148.5ZM293.5 150L289.6 150.4L291.8 153.5ZM302.8 151.6L306.5 152.7L305.7 149ZM321.5 150.3L317.9 148.8L318.4 152.6ZM331.7 152.1L334.4 149.3L330.7 148.3ZM349.5 150.6L346.6 148.1L345.8 151.8ZM361.6 152.3L363.4 148.8L359.6 148.9ZM375.8 147.3L373.4 150.4L377.2 150.9ZM66.3 165.3L62.6 166.4L65.2 169.1ZM79.6 168.5L79.7 164.6L76.3 166.4ZM91.1 164.5L87.7 166.5L91 168.4ZM103 168.4L105.3 165.3L101.5 164.8ZM118.3 167.8L118 163.9L114.9 166ZM128.7 169L132.1 167L128.8 165.1ZM142 164.2L139.5 167.3L143.3 167.9ZM153.7 164.5L156.3 167.4L157.6 163.8ZM167.4 163.4L167.1 167.2L170.5 165.6ZM180.7 166.6L184.3 165.1L181.3 162.8ZM195.9 163.3L192.2 164.5L195 167.1ZM209.4 167.6L208.4 163.9L205.7 166.5ZM222 162.3L219.1 164.9L222.7 166.1ZM237.2 165.9L234.5 163.1L233.4 166.7ZM248.2 163.3L248.3 167.2L251.5 165.2ZM261.4 163.3L263.4 166.7L265.3 163.4ZM274.5 166.7L277.8 164.6L274.5 162.8ZM288.7 161.2L288.7 165.1L292 163.2ZM302.9 166.8L305.5 163.9L301.8 163.1ZM317.9 165.3L319.2 161.6L315.4 162.3ZM330.7 160.8L330.6 164.7L333.9 162.9ZM347.9 160.7L345 163.3L348.7 164.5ZM357.8 163.3L361.5 164.5L360.7 160.8ZM374.4 160.1L373 163.7L376.8 163.2ZM62.3 180.2L66.2 180L64.1 176.8ZM78.6 179.4L75.5 177L74.9 180.7ZM90.2 177.7L86.7 179.4L89.8 181.5ZM100.4 178L101 181.8L104 179.5ZM117.1 180.8L116.5 176.9L113.5 179.2ZM125.1 178.4L128.6 180.1L128.4 176.3ZM138.8 180.2L142.6 180.9L141.4 177.3ZM151.2 178L153.1 181.4L155.1 178.1ZM169.1 179.6L168.3 175.8L165.4 178.3ZM178 178.6L181.8 179.6L180.9 176ZM191.7 178.9L195.6 179.1L194 175.7ZM208.7 179.2L206.9 175.7L204.8 178.9ZM220.8 179.9L222.6 176.5L218.8 176.6ZM237.2 176.6L233.4 175.7L234.4 179.4ZM250 177.7L246.4 176.1L246.7 179.9ZM261.5 180.4L263.6 177.1L259.8 176.9ZM274.5 175.4L274.8 179.3L277.9 177.2ZM290.9 178.5L290.5 174.6L287.4 176.9ZM302.4 174.6L302.8 178.5L305.9 176.3ZM319.7 178.2L316.8 175.5L315.9 179.2ZM329.8 174.8L328.9 178.6L332.6 177.5ZM345.6 178.4L347.2 174.8L343.4 175.1ZM362.4 176.7L359.2 174.5L358.8 178.3ZM375.6 177L372.1 175.2L372.3 179ZM60.7 195.1L62.9 192L59.2 191.5ZM76.4 193.9L76.2 190L73 192ZM87.2 189.7L85.9 193.4L89.7 192.7ZM98.9 190.6L101 193.9L102.8 190.5ZM115.9 191.5L112.6 189.3L112.3 193.1ZM124.1 192.4L127.7 193.9L127.3 190.2ZM136.3 192.2L140.2 192.8L138.9 189.3ZM152.5 193.7L154.9 190.6L151.1 190.1ZM167.5 192.6L166.3 188.9L163.7 191.6ZM178 189L176.6 192.6L180.4 192.1ZM194.8 193.7L193.6 190L191 192.8ZM207.9 190.9L204 190.6L205.7 194ZM218 189.2L217.2 193L220.9 191.9ZM233.5 193.7L233.7 189.8L230.3 191.5ZM248.3 192.6L248.3 188.7L245 190.5ZM261.5 189.7L257.8 191L260.7 193.5ZM276.3 188.7L272.6 190.1L275.5 192.6ZM286.9 188.3L288.5 191.9L290.8 188.9ZM299.5 192.4L303.3 192.2L301.4 189ZM318.2 190.8L315.4 188L314.4 191.7ZM329.2 188L330.5 191.7L333 188.8ZM343.8 187.8L344.2 191.7L347.3 189.5ZM360.8 191.3L357.9 188.6L357 192.3ZM373.8 187.3L370.9 189.9L374.5 191.2ZM57.9 205.7L61.8 205.4L59.7 202.3ZM72.5 203.1L72.4 207L75.8 205.1ZM86.9 207.2L87.6 203.4L84 204.6ZM95.9 204L99.1 206.2L99.5 202.4ZM109.2 205.1L112.9 206.2L112.1 202.5ZM127 206.4L126.6 202.5L123.5 204.7ZM137.7 202.2L136.3 205.8L140 205.3ZM148 204.4L151.1 206.7L151.5 202.9ZM166.1 202.7L162.3 203.6L164.9 206.4ZM179.4 202.3L175.7 203.6L178.6 206.1ZM188 204.3L191.6 205.8L191.2 202ZM205.4 205.6L205.2 201.8L202 203.8ZM216.8 202.3L218.2 206L220.7 203.1ZM233 205.4L231.5 201.8L229.1 204.8ZM244.4 206.5L247.7 204.5L244.4 202.6ZM259.4 201.6L258.5 205.4L262.2 204.3ZM274.5 202.8L270.8 204L273.6 206.6ZM289.4 203.8L285.6 202.8L286.6 206.5ZM303.3 202.1L299.4 201.9L301.1 205.3ZM317 202.1L313.1 201.9L314.7 205.3ZM327.9 203.7L331.7 204.7L330.8 201ZM345.3 200.7L342 202.8L345.4 204.6ZM356.4 204.3L360.1 205.5L359.4 201.8ZM373.7 205.7L373.9 201.8L370.5 203.5ZM56.2 215.4L56.7 219.3L59.8 217ZM70.5 215.8L68.9 219.3L72.7 219ZM87.4 217.7L84 215.7L83.9 219.5ZM95.9 219.4L99.7 218.7L97.3 215.8ZM109.3 215.4L107.3 218.7L111.1 218.8ZM124.8 219.6L122.7 216.3L120.9 219.7ZM133.8 216.6L135.9 219.9L137.7 216.5ZM147.5 219.5L151 217.8L147.8 215.6ZM160.9 215.4L162.4 219.1L164.8 216.1ZM177.8 219.2L177.3 215.3L174.3 217.5ZM190.1 214.9L188.7 218.5L192.4 218ZM203.7 214.7L202.4 218.3L206.1 217.7ZM219.5 216L215.7 216.8L218.2 219.7ZM232.3 218.1L229.6 215.3L228.5 218.9ZM243.8 215.1L243.1 219L246.7 217.7ZM260.5 217.3L256.7 216.2L257.6 219.9ZM271.1 219.5L274.9 219.1L272.7 216ZM285.1 219.5L288.5 217.6L285.3 215.6ZM301.5 215L298.3 217.2L301.7 218.9ZM312 217.8L315.9 218L314.3 214.6ZM328.6 220.4L329.9 216.8L326.2 217.3ZM343.1 219.5L345.2 216.2L341.4 216ZM358.3 218.5L358.1 214.6L354.9 216.7ZM373 215.1L369.5 216.9L372.7 219ZM55.8 232.1L59.4 230.7L56.5 228.3ZM67.8 229.5L69.5 233L71.6 229.9ZM79.5 230.6L81.7 233.8L83.4 230.4ZM96.7 232.5L94.9 229L92.8 232.2ZM108 233.1L111.5 231.5L108.4 229.2ZM123.4 233.6L123 229.8L119.9 231.9ZM137.5 232.7L135.3 229.5L133.7 232.9ZM148.5 233.2L149.2 229.4L145.6 230.6ZM163.5 229.5L159.6 229.3L161.3 232.7ZM173 228.9L173.3 232.8L176.5 230.8ZM191.3 232L188.3 229.4L187.5 233.1ZM199.4 230.5L202.6 232.7L202.9 228.9ZM213.9 232.3L217.8 232L215.7 228.9ZM227.6 228.3L228 232.2L231.1 230ZM245.7 230.4L242.3 228.5L242.3 232.3ZM256.8 228.5L256.8 232.4L260.1 230.5ZM271.4 234.1L272.5 230.4L268.8 231.2ZM285.6 228.9L282.2 230.7L285.5 232.8ZM300.2 228.9L297.7 231.9L301.5 232.5ZM312.5 233L315 230L311.3 229.3ZM329.8 232L328.4 228.4L326 231.3ZM340.9 228.3L339.8 232L343.5 231.2ZM355.8 229.4L354.3 233L358.1 232.5ZM370.3 228.5L368.1 231.7L371.8 232.1ZM57.2 243.9L53.4 243L54.4 246.6ZM69.1 242.6L65.2 242.5L67 245.9ZM81.7 246.9L82.5 243.1L78.9 244.2ZM94.3 242.4L91.5 245.1L95.1 246.2ZM109.3 242.8L105.5 243.6L108 246.5ZM122.6 243.7L118.8 242.8L119.9 246.5ZM132.4 241.2L131.6 245L135.2 243.8ZM149.3 246L147.1 242.8L145.4 246.2ZM162.3 244.6L159.4 242L158.6 245.7ZM174.9 245.4L172.8 242.2L171 245.5ZM187.5 242.1L184.3 244.2L187.6 246ZM197.6 243.6L200.8 245.8L201.2 242.1ZM215.8 245.7L214.5 242L212 244.9ZM230.7 243.9L227.1 242.5L227.6 246.2ZM240.3 243.9L242.6 247.1L244.2 243.7ZM255.6 242.8L253.9 246.4L257.7 246.1ZM268.6 243L268.6 246.9L271.9 245ZM282.1 243.3L283 247.1L285.8 244.5ZM295.9 245.7L299.8 246.3L298.5 242.7ZM310.4 243.3L312.5 246.6L314.3 243.3ZM323.9 245.3L327.7 246.3L326.7 242.7ZM341.6 247.5L342.5 243.8L338.9 244.8ZM355.7 241.7L354.3 245.3L358.1 244.8ZM371.6 243.1L368 244.7L371 247ZM52.7 260L55.5 257.2L51.9 256.2ZM64.4 257.2L67.6 259.4L68 255.6ZM79.1 254.5L76.5 257.4L80.2 258.2ZM90.5 255L90.4 258.9L93.8 257.1ZM103.4 258.5L107.1 259.7L106.4 256ZM121.5 258.4L118.8 255.6L117.8 259.3ZM130.9 259.7L134.2 257.7L130.9 255.8ZM146.4 259.1L145.8 255.2L142.8 257.6ZM157.1 255.7L157.7 259.5L160.7 257.2ZM175.3 256.9L171.5 256.2L172.8 259.8ZM188.3 256.4L184.4 256.8L186.5 259.9ZM196.9 256.7L199.8 259.3L200.6 255.6ZM210.8 259.6L214.5 258.4L211.7 255.9ZM228.6 258L224.7 257.2L225.9 260.8ZM238.8 258.7L242.7 258.4L240.6 255.3ZM253.8 255.6L254.4 259.4L257.4 257ZM268.4 261L271.3 258.5L267.8 257.2ZM283 255.7L282 259.4L285.7 258.5ZM295.1 257.6L298.2 260L298.7 256.2ZM309.1 259.8L312.9 259L310.4 256.1ZM326.7 260.3L326.8 256.4L323.4 258.2ZM341 256.6L337.5 258.4L340.7 260.5ZM352.5 260.4L356.1 259L353.2 256.6ZM371.3 260.1L370.7 256.3L367.7 258.6ZM53.6 271.7L51.6 268.4L49.7 271.7ZM62.2 271.5L66.1 271.7L64.4 268.3ZM78 273.5L79.2 269.8L75.5 270.4ZM90.1 272.7L93.6 271L90.5 268.8ZM101.5 272.2L105.1 270.7L102.2 268.3ZM119.5 270.2L115.8 268.8L116.4 272.6ZM128.9 271.9L132.7 271.5L130.5 268.4ZM145.2 272.9L144.5 269.1L141.6 271.5ZM159.1 270.8L155.3 269.8L156.3 273.5ZM173.2 270.2L169.4 269.4L170.5 273.1ZM182.5 272.7L186.3 271.7L183.7 269ZM196 271.9L199.7 273.1L198.9 269.4ZM210.1 272.7L214 273.4L212.7 269.8ZM227.1 270.2L223.8 272.2L227.1 274.1ZM241 272.6L239.7 268.9L237.2 271.8ZM251.9 273.7L255.7 272.8L253.2 270ZM269.8 269.3L266.3 271L269.4 273.2ZM283.7 271.3L280.2 269.6L280.5 273.4ZM296.9 275.2L297.6 271.4L294 272.6ZM308 272.7L311.5 274.4L311.2 270.6ZM322.8 270.1L323 274L326.3 272ZM341.6 274.8L340.9 271L337.9 273.4ZM354.7 271.8L350.9 272.3L353.1 275.4ZM369.7 270.2L366.4 272.3L369.8 274.1ZM50.4 285.4L51.7 281.7L47.9 282.3ZM63.7 285.7L63.2 281.9L60.2 284.1ZM75.1 282.7L75.7 286.6L78.7 284.3ZM91.3 285.4L90.6 281.6L87.7 284ZM105.2 284.1L101.5 283.1L102.4 286.8ZM116.7 281.7L113.8 284.4L117.4 285.5ZM126.5 283.6L128 287.2L130.3 284.2ZM144 282.1L140.3 283.2L143 285.8ZM158.6 284.7L155.1 283L155.3 286.8ZM170.5 287L170.2 283.1L167 285.2ZM179.8 285L183.6 286L182.7 282.3ZM193.7 284.6L197.3 286.2L196.9 282.4ZM213.1 284L209.4 283L210.3 286.6ZM223.3 287.9L225.7 284.9L221.9 284.3ZM237.9 287.7L241.3 285.8L238.2 283.8ZM252.3 288.4L255 285.6L251.3 284.6ZM263.9 284.1L265.9 287.4L267.8 284.1ZM283.7 287.2L281.1 284.3L279.9 287.9ZM294.7 288.2L297.3 285.3L293.6 284.4ZM310.4 288.9L311.4 285.1L307.7 286.1ZM325.5 287.2L324 283.6L321.6 286.6ZM338.5 289.2L338.6 285.3L335.3 287.1ZM351 288.1L354.9 287.8L352.8 284.6ZM368.2 288.6L367.4 284.8L364.5 287.3ZM45.5 295.2L46.6 298.9L49.3 296.3ZM62.9 297.8L59.5 295.8L59.4 299.6ZM73.6 299.6L75.7 296.3L71.9 296.1ZM87.4 294.4L86 298L89.8 297.5ZM98.9 299.8L102.6 298.7L99.9 296.1ZM111.8 297.8L114.4 300.7L115.6 297.1ZM128.3 300.3L127.4 296.5L124.6 299ZM140.1 296L138.2 299.4L142 299.4ZM155.2 300.9L157.1 297.4L153.3 297.5ZM167.5 300.8L169.7 297.6L165.9 297.2ZM180.9 296.5L180.9 300.4L184.2 298.5ZM197.4 298.6L193.9 297L194.2 300.8ZM207.5 298.9L211.1 300.5L210.8 296.7ZM224.5 297.5L221.2 299.5L224.5 301.4ZM239.2 298.6L235.7 297.1L236.1 300.9ZM253.5 297.6L249.7 298.2L252.1 301.2ZM266.9 297.9L263 298.5L265.3 301.5ZM278.7 301.3L282.4 300.2L279.6 297.6ZM294 298.4L292.7 302L296.4 301.4ZM306.8 300.4L309.8 302.8L310.4 299ZM321.2 302.1L324.6 300.2L321.4 298.2ZM338.1 302.6L339.2 298.9L335.5 299.8ZM350.2 300.5L352.8 303.5L354 299.9ZM364 300.4L365.6 304L367.9 300.9ZM48 311L46.2 307.5L44.1 310.7ZM57.9 308.1L58 312L61.3 310ZM73.5 312.6L72.4 308.9L69.7 311.7ZM83 310.6L85.3 313.7L86.9 310.3ZM98 309.4L98.1 313.3L101.4 311.3ZM112.9 309L110.6 312.1L114.3 312.6ZM124.7 314.2L128.2 312.6L125.1 310.4ZM140.1 309.7L137.6 312.7L141.3 313.4ZM154.1 313.4L153.9 309.5L150.7 311.4ZM165.1 311.2L166.1 314.9L168.9 312.3ZM178 313.8L181.9 313.5L179.8 310.4ZM194.9 314.5L195.6 310.6L192 311.9ZM207.2 310.7L205.3 314.1L209.1 314.1ZM222.3 311L219.9 314.1L223.6 314.7ZM234 315.8L237.8 314.8L235.2 312.1ZM250.3 311.4L247.3 314L250.9 315.2ZM264.1 316.5L266.5 313.4L262.7 312.8ZM280.3 314.7L278.6 311.2L276.4 314.3ZM291.9 312.5L291.9 316.4L295.2 314.6ZM309 315.6L307 312.2L305.1 315.6ZM323.4 312.5L320.5 315L324.1 316.3ZM334.6 316.1L338.3 317.1L337.4 313.4ZM351.1 312.4L349.3 315.9L353.1 315.8ZM363.7 316.2L367.2 317.8L366.8 314ZM42.3 322.3L43.4 326L46.1 323.3ZM55.1 324.1L58.1 326.7L58.8 322.9ZM70.1 321.6L68.8 325.3L72.5 324.7ZM82.5 323.2L83.1 327.1L86.1 324.8ZM99.4 326.1L98 322.5L95.6 325.4ZM112.6 323.6L108.9 324.9L111.7 327.4ZM122.6 327.3L126 325.3L122.7 323.4ZM137.9 328.4L140.6 325.6L136.8 324.7ZM148.7 326L152 328L152.1 324.2ZM166.6 325.3L162.9 324.2L163.7 327.9ZM179.3 328.3L181.4 325L177.6 324.8ZM193.6 325.5L190 326.9L192.9 329.3ZM204.6 327.5L207.8 329.7L208.1 325.9ZM221 330L223.3 326.9L219.5 326.4ZM237 328.8L235.2 325.4L233.2 328.6ZM250 325.6L246.2 326.2L248.5 329.2ZM260.4 326.6L262.2 330.1L264.3 327ZM280.5 328.6L277.1 326.7L277.1 330.5ZM291.8 326.7L290 330.1L293.8 330.1ZM308.3 328.5L304.5 327.5L305.4 331.2ZM323.3 327.4L319.5 328L321.8 331ZM334.7 326.7L334.5 330.5L337.9 328.9ZM347.5 331.3L351.3 330.6L348.9 327.7ZM362.2 331.2L366.1 330.9L364 327.7ZM40.7 338.5L44.5 339.2L43.3 335.6ZM54.9 339.6L58.2 337.6L54.9 335.7ZM68.3 335.3L67 338.9L70.7 338.4ZM84.3 339.4L81.4 336.8L80.5 340.5ZM94.7 337.7L96.1 341.3L98.5 338.4ZM107.2 340.4L111.1 340.7L109.4 337.2ZM121.7 340.6L125.1 338.8L121.9 336.8ZM134.9 342.2L137.4 339.3L133.7 338.5ZM147.4 337.7L148.4 341.5L151.1 338.9ZM166.5 339.3L162.6 338.6L163.8 342.2ZM180.5 341.1L177.6 338.5L176.8 342.2ZM189.3 340.6L192.5 342.8L192.8 339ZM206.1 343.3L207.2 339.6L203.5 340.3ZM216.4 341.2L220.2 342.1L219.2 338.5ZM233 343.7L235.8 341L232.2 339.9ZM245.4 341L248.3 343.6L249.1 339.8ZM263.1 342.7L261.2 339.3L259.2 342.5ZM278.7 343L275.3 341.1L275.3 344.9ZM289.8 341L290.7 344.8L293.5 342.2ZM307.8 344.2L304.6 341.9L304.2 345.7ZM317.3 342.9L320.7 344.7L320.6 340.9ZM335.2 341L331.7 342.8L334.9 344.9ZM351.8 344.1L348 343.4L349.3 347ZM363.9 346.7L365.1 343L361.4 343.7Z"/>
<path fill="none" stroke="#33d033" stroke-width="1.3" d="M66.9 126.1h6.8v6.8h-6.8zM79.5 125.8h6.8v6.8h-6.8zM92.2 125.6h6.8v6.8h-6.8zM104.9 125.3h6.8v6.8h-6.8zM117.7 125.1h6.8v6.8h-6.8zM130.6 124.8h6.8v6.8h-6.8zM143.5 124.5h6.8v6.8h-6.8zM156.5 124.3h6.8v6.8h-6.8zM169.6 124h6.8v6.8h-6.8zM182.7 123.7h6.8v6.8h-6.8zM195.9 123.5h6.8v6.8h-6.8zM209.2 123.2h6.8v6.8h-6.8zM222.5 122.9h6.8v6.8h-6.8zM235.9 122.6h6.8v6.8h-6.8zM249.4 122.4h6.8v6.8h-6.8zM263 122.1h6.8v6.8h-6.8zM276.6 121.8h6.8v6.8h-6.8zM290.3 121.5h6.8v6.8h-6.8zM304.1 121.2h6.8v6.8h-6.8zM317.9 121h6.8v6.8h-6.8zM331.8 120.7h6.8v6.8h-6.8zM345.8 120.4h6.8v6.8h-6.8zM359.9 120.1h6.8v6.8h-6.8zM374 119.8h6.8v6.8h-6.8zM65.3 138.5h6.8v6.8h-6.8zM77.9 138.3h6.8v6.8h-6.8zM90.6 138.1h6.8v6.8h-6.8zM103.4 137.8h6.8v6.8h-6.8zM116.2 137.6h6.8v6.8h-6.8zM129.1 137.4h6.8v6.8h-6.8zM142.1 137.1h6.8v6.8h-6.8zM155.1 136.9h6.8v6.8h-6.8zM168.2 136.7h6.8v6.8h-6.8zM181.4 136.4h6.8v6.8h-6.8zM194.6 136.2h6.8v6.8h-6.8zM207.9 136h6.8v6.8h-6.8zM221.3 135.7h6.8v6.8h-6.8zM234.8 135.5h6.8v6.8h-6.8zM248.3 135.2h6.8v6.8h-6.8zM261.9 135h6.8v6.8h-6.8zM275.5 134.7h6.8v6.8h-6.8zM289.3 134.5h6.8v6.8h-6.8zM303.1 134.2h6.8v6.8h-6.8zM317 134h6.8v6.8h-6.8zM330.9 133.7h6.8v6.8h-6.8zM344.9 133.5h6.8v6.8h-6.8zM359 133.2h6.8v6.8h-6.8zM373.2 133h6.8v6.8h-6.8zM63.6 151h6.8v6.8h-6.8zM76.3 150.8h6.8v6.8h-6.8zM89 150.6h6.8v6.8h-6.8zM101.8 150.4h6.8v6.8h-6.8zM114.7 150.2h6.8v6.8h-6.8zM127.6 150h6.8v6.8h-6.8zM140.6 149.8h6.8v6.8h-6.8zM153.7 149.6h6.8v6.8h-6.8zM166.8 149.4h6.8v6.8h-6.8zM180.1 149.2h6.8v6.8h-6.8zM193.3 149h6.8v6.8h-6.8zM206.7 148.8h6.8v6.8h-6.8zM220.1 148.6h6.8v6.8h-6.8zM233.6 148.4h6.8v6.8h-6.8zM247.1 148.2h6.8v6.8h-6.8zM260.8 148h6.8v6.8h-6.8zM274.5 147.8h6.8v6.8h-6.8zM288.2 147.5h6.8v6.8h-6.8zM302.1 147.3h6.8v6.8h-6.8zM316 147.1h6.8v6.8h-6.8zM330 146.9h6.8v6.8h-6.8zM344.1 146.7h6.8v6.8h-6.8zM358.2 146.5h6.8v6.8h-6.8zM372.4 146.2h6.8v6.8h-6.8zM62 163.6h6.8v6.8h-6.8zM74.7 163.4h6.8v6.8h-6.8zM87.4 163.3h6.8v6.8h-6.8zM100.3 163.1h6.8v6.8h-6.8zM113.2 162.9h6.8v6.8h-6.8zM126.2 162.8h6.8v6.8h-6.8zM139.2 162.6h6.8v6.8h-6.8zM152.3 162.4h6.8v6.8h-6.8zM165.5 162.2h6.8v6.8h-6.8zM178.7 162.1h6.8v6.8h-6.8zM192 161.9h6.8v6.8h-6.8zM205.4 161.7h6.8v6.8h-6.8zM218.9 161.6h6.8v6.8h-6.8zM232.4 161.4h6.8v6.8h-6.8zM246 161.2h6.8v6.8h-6.8zM259.7 161h6.8v6.8h-6.8zM273.4 160.8h6.8v6.8h-6.8zM287.2 160.7h6.8v6.8h-6.8zM301.1 160.5h6.8v6.8h-6.8zM315.1 160.3h6.8v6.8h-6.8zM329.1 160.1h6.8v6.8h-6.8zM343.2 159.9h6.8v6.8h-6.8zM357.4 159.8h6.8v6.8h-6.8zM371.7 159.6h6.8v6.8h-6.8zM60.3 176.2h6.8v6.8h-6.8zM73 176.1h6.8v6.8h-6.8zM85.8 176h6.8v6.8h-6.8zM98.7 175.8h6.8v6.8h-6.8zM111.7 175.7h6.8v6.8h-6.8zM124.7 175.6h6.8v6.8h-6.8zM137.7 175.4h6.8v6.8h-6.8zM150.9 175.3h6.8v6.8h-6.8zM164.1 175.2h6.8v6.8h-6.8zM177.4 175h6.8v6.8h-6.8zM190.7 174.9h6.8v6.8h-6.8zM204.1 174.7h6.8v6.8h-6.8zM217.6 174.6h6.8v6.8h-6.8zM231.2 174.5h6.8v6.8h-6.8zM244.8 174.3h6.8v6.8h-6.8zM258.5 174.2h6.8v6.8h-6.8zM272.3 174h6.8v6.8h-6.8zM286.2 173.9h6.8v6.8h-6.8zM300.1 173.7h6.8v6.8h-6.8zM314.1 173.6h6.8v6.8h-6.8zM328.2 173.4h6.8v6.8h-6.8zM342.3 173.3h6.8v6.8h-6.8zM356.6 173.1h6.8v6.8h-6.8zM370.9 173h6.8v6.8h-6.8zM58.6 189h6.8v6.8h-6.8zM71.4 188.9h6.8v6.8h-6.8zM84.2 188.8h6.8v6.8h-6.8zM97.1 188.7h6.8v6.8h-6.8zM110.1 188.6h6.8v6.8h-6.8zM123.2 188.5h6.8v6.8h-6.8zM136.3 188.4h6.8v6.8h-6.8zM149.4 188.2h6.8v6.8h-6.8zM162.7 188.1h6.8v6.8h-6.8zM176 188h6.8v6.8h-6.8zM189.4 187.9h6.8v6.8h-6.8zM202.9 187.8h6.8v6.8h-6.8zM216.4 187.7h6.8v6.8h-6.8zM230 187.6h6.8v6.8h-6.8zM243.7 187.5h6.8v6.8h-6.8zM257.4 187.4h6.8v6.8h-6.8zM271.2 187.3h6.8v6.8h-6.8zM285.1 187.2h6.8v6.8h-6.8zM299.1 187.1h6.8v6.8h-6.8zM313.1 187h6.8v6.8h-6.8zM327.3 186.8h6.8v6.8h-6.8zM341.5 186.7h6.8v6.8h-6.8zM355.7 186.6h6.8v6.8h-6.8zM370.1 186.5h6.8v6.8h-6.8zM56.9 201.8h6.8v6.8h-6.8zM69.7 201.7h6.8v6.8h-6.8zM82.6 201.6h6.8v6.8h-6.8zM95.6 201.6h6.8v6.8h-6.8zM108.6 201.5h6.8v6.8h-6.8zM121.6 201.4h6.8v6.8h-6.8zM134.8 201.3h6.8v6.8h-6.8zM148 201.3h6.8v6.8h-6.8zM161.3 201.2h6.8v6.8h-6.8zM174.6 201.1h6.8v6.8h-6.8zM188.1 201.1h6.8v6.8h-6.8zM201.6 201h6.8v6.8h-6.8zM215.1 200.9h6.8v6.8h-6.8zM228.8 200.8h6.8v6.8h-6.8zM242.5 200.8h6.8v6.8h-6.8zM256.3 200.7h6.8v6.8h-6.8zM270.1 200.6h6.8v6.8h-6.8zM284.1 200.6h6.8v6.8h-6.8zM298.1 200.5h6.8v6.8h-6.8zM312.2 200.4h6.8v6.8h-6.8zM326.3 200.3h6.8v6.8h-6.8zM340.6 200.3h6.8v6.8h-6.8zM354.9 200.2h6.8v6.8h-6.8zM369.3 200.1h6.8v6.8h-6.8zM55.2 214.6h6.8v6.8h-6.8zM68.1 214.6h6.8v6.8h-6.8zM81 214.6h6.8v6.8h-6.8zM94 214.5h6.8v6.8h-6.8zM107 214.5h6.8v6.8h-6.8zM120.1 214.5h6.8v6.8h-6.8zM133.3 214.4h6.8v6.8h-6.8zM146.6 214.4h6.8v6.8h-6.8zM159.9 214.4h6.8v6.8h-6.8zM173.3 214.3h6.8v6.8h-6.8zM186.7 214.3h6.8v6.8h-6.8zM200.3 214.2h6.8v6.8h-6.8zM213.9 214.2h6.8v6.8h-6.8zM227.6 214.2h6.8v6.8h-6.8zM241.3 214.1h6.8v6.8h-6.8zM255.1 214.1h6.8v6.8h-6.8zM269 214.1h6.8v6.8h-6.8zM283 214h6.8v6.8h-6.8zM297.1 214h6.8v6.8h-6.8zM311.2 213.9h6.8v6.8h-6.8zM325.4 213.9h6.8v6.8h-6.8zM339.7 213.9h6.8v6.8h-6.8zM354 213.8h6.8v6.8h-6.8zM368.5 213.8h6.8v6.8h-6.8zM53.5 227.6h6.8v6.8h-6.8zM66.4 227.6h6.8v6.8h-6.8zM79.4 227.6h6.8v6.8h-6.8zM92.4 227.6h6.8v6.8h-6.8zM105.4 227.6h6.8v6.8h-6.8zM118.6 227.6h6.8v6.8h-6.8zM131.8 227.6h6.8v6.8h-6.8zM145.1 227.6h6.8v6.8h-6.8zM158.5 227.6h6.8v6.8h-6.8zM171.9 227.6h6.8v6.8h-6.8zM185.4 227.6h6.8v6.8h-6.8zM199 227.6h6.8v6.8h-6.8zM212.6 227.6h6.8v6.8h-6.8zM226.3 227.6h6.8v6.8h-6.8zM240.1 227.6h6.8v6.8h-6.8zM254 227.6h6.8v6.8h-6.8zM267.9 227.6h6.8v6.8h-6.8zM281.9 227.6h6.8v6.8h-6.8zM296 227.6h6.8v6.8h-6.8zM310.2 227.6h6.8v6.8h-6.8zM324.5 227.6h6.8v6.8h-6.8zM338.8 227.6h6.8v6.8h-6.8zM353.2 227.6h6.8v6.8h-6.8zM367.7 227.6h6.8v6.8h-6.8zM51.8 240.6h6.8v6.8h-6.8zM64.7 240.7h6.8v6.8h-6.8zM77.7 240.7h6.8v6.8h-6.8zM90.8 240.7h6.8v6.8h-6.8zM103.9 240.8h6.8v6.8h-6.8zM117.1 240.8h6.8v6.8h-6.8zM130.3 240.8h6.8v6.8h-6.8zM143.6 240.9h6.8v6.8h-6.8zM157 240.9h6.8v6.8h-6.8zM170.5 240.9h6.8v6.8h-6.8zM184 241h6.8v6.8h-6.8zM197.6 241h6.8v6.8h-6.8zM211.3 241h6.8v6.8h-6.8zM225.1 241.1h6.8v6.8h-6.8zM238.9 241.1h6.8v6.8h-6.8zM252.8 241.1h6.8v6.8h-6.8zM266.8 241.2h6.8v6.8h-6.8zM280.9 241.2h6.8v6.8h-6.8zM295 241.2h6.8v6.8h-6.8zM309.2 241.3h6.8v6.8h-6.8zM323.5 241.3h6.8v6.8h-6.8zM337.9 241.3h6.8v6.8h-6.8zM352.3 241.4h6.8v6.8h-6.8zM366.9 241.4h6.8v6.8h-6.8zM50.1 253.7h6.8v6.8h-6.8zM63 253.8h6.8v6.8h-6.8zM76 253.9h6.8v6.8h-6.8zM89.1 253.9h6.8v6.8h-6.8zM102.3 254h6.8v6.8h-6.8zM115.5 254.1h6.8v6.8h-6.8zM128.8 254.1h6.8v6.8h-6.8zM142.2 254.2h6.8v6.8h-6.8zM155.6 254.3h6.8v6.8h-6.8zM169.1 254.3h6.8v6.8h-6.8zM182.7 254.4h6.8v6.8h-6.8zM196.3 254.5h6.8v6.8h-6.8zM210 254.6h6.8v6.8h-6.8zM223.8 254.6h6.8v6.8h-6.8zM237.7 254.7h6.8v6.8h-6.8zM251.7 254.8h6.8v6.8h-6.8zM265.7 254.9h6.8v6.8h-6.8zM279.8 254.9h6.8v6.8h-6.8zM294 255h6.8v6.8h-6.8zM308.2 255.1h6.8v6.8h-6.8zM322.6 255.1h6.8v6.8h-6.8zM337 255.2h6.8v6.8h-6.8zM351.5 255.3h6.8v6.8h-6.8zM366 255.4h6.8v6.8h-6.8zM48.3 266.9h6.8v6.8h-6.8zM61.3 267h6.8v6.8h-6.8zM74.4 267.1h6.8v6.8h-6.8zM87.5 267.2h6.8v6.8h-6.8zM100.7 267.3h6.8v6.8h-6.8zM113.9 267.4h6.8v6.8h-6.8zM127.3 267.5h6.8v6.8h-6.8zM140.7 267.6h6.8v6.8h-6.8zM154.1 267.8h6.8v6.8h-6.8zM167.7 267.9h6.8v6.8h-6.8zM181.3 268h6.8v6.8h-6.8zM195 268.1h6.8v6.8h-6.8zM208.8 268.2h6.8v6.8h-6.8zM222.6 268.3h6.8v6.8h-6.8zM236.5 268.4h6.8v6.8h-6.8zM250.5 268.5h6.8v6.8h-6.8zM264.6 268.6h6.8v6.8h-6.8zM278.7 268.7h6.8v6.8h-6.8zM292.9 268.8h6.8v6.8h-6.8zM307.2 269h6.8v6.8h-6.8zM321.6 269.1h6.8v6.8h-6.8zM336.1 269.2h6.8v6.8h-6.8zM350.6 269.3h6.8v6.8h-6.8zM365.2 269.4h6.8v6.8h-6.8zM46.6 280.2h6.8v6.8h-6.8zM59.6 280.3h6.8v6.8h-6.8zM72.7 280.5h6.8v6.8h-6.8zM85.9 280.6h6.8v6.8h-6.8zM99.1 280.7h6.8v6.8h-6.8zM112.4 280.9h6.8v6.8h-6.8zM125.7 281h6.8v6.8h-6.8zM139.2 281.2h6.8v6.8h-6.8zM152.7 281.3h6.8v6.8h-6.8zM166.3 281.5h6.8v6.8h-6.8zM179.9 281.6h6.8v6.8h-6.8zM193.7 281.7h6.8v6.8h-6.8zM207.5 281.9h6.8v6.8h-6.8zM221.3 282h6.8v6.8h-6.8zM235.3 282.2h6.8v6.8h-6.8zM249.3 282.3h6.8v6.8h-6.8zM263.4 282.5h6.8v6.8h-6.8zM277.6 282.6h6.8v6.8h-6.8zM291.9 282.8h6.8v6.8h-6.8zM306.2 282.9h6.8v6.8h-6.8zM320.6 283.1h6.8v6.8h-6.8zM335.1 283.2h6.8v6.8h-6.8zM349.7 283.4h6.8v6.8h-6.8zM364.4 283.5h6.8v6.8h-6.8zM44.8 293.5h6.8v6.8h-6.8zM57.9 293.7h6.8v6.8h-6.8zM71 293.9h6.8v6.8h-6.8zM84.2 294.1h6.8v6.8h-6.8zM97.5 294.2h6.8v6.8h-6.8zM110.8 294.4h6.8v6.8h-6.8zM124.2 294.6h6.8v6.8h-6.8zM137.7 294.8h6.8v6.8h-6.8zM151.2 295h6.8v6.8h-6.8zM164.8 295.1h6.8v6.8h-6.8zM178.5 295.3h6.8v6.8h-6.8zM192.3 295.5h6.8v6.8h-6.8zM206.1 295.7h6.8v6.8h-6.8zM220.1 295.9h6.8v6.8h-6.8zM234.1 296.1h6.8v6.8h-6.8zM248.1 296.2h6.8v6.8h-6.8zM262.3 296.4h6.8v6.8h-6.8zM276.5 296.6h6.8v6.8h-6.8zM290.8 296.8h6.8v6.8h-6.8zM305.2 297h6.8v6.8h-6.8zM319.7 297.2h6.8v6.8h-6.8zM334.2 297.4h6.8v6.8h-6.8zM348.8 297.6h6.8v6.8h-6.8zM363.5 297.8h6.8v6.8h-6.8zM43.1 307h6.8v6.8h-6.8zM56.2 307.2h6.8v6.8h-6.8zM69.3 307.4h6.8v6.8h-6.8zM82.5 307.6h6.8v6.8h-6.8zM95.8 307.8h6.8v6.8h-6.8zM109.2 308h6.8v6.8h-6.8zM122.7 308.3h6.8v6.8h-6.8zM136.2 308.5h6.8v6.8h-6.8zM149.8 308.7h6.8v6.8h-6.8zM163.4 308.9h6.8v6.8h-6.8zM177.1 309.1h6.8v6.8h-6.8zM191 309.3h6.8v6.8h-6.8zM204.8 309.6h6.8v6.8h-6.8zM218.8 309.8h6.8v6.8h-6.8zM232.8 310h6.8v6.8h-6.8zM246.9 310.2h6.8v6.8h-6.8zM261.1 310.5h6.8v6.8h-6.8zM275.4 310.7h6.8v6.8h-6.8zM289.7 310.9h6.8v6.8h-6.8zM304.2 311.1h6.8v6.8h-6.8zM318.7 311.4h6.8v6.8h-6.8zM333.3 311.6h6.8v6.8h-6.8zM347.9 311.8h6.8v6.8h-6.8zM362.7 312.1h6.8v6.8h-6.8zM41.3 320.5h6.8v6.8h-6.8zM54.4 320.7h6.8v6.8h-6.8zM67.6 321h6.8v6.8h-6.8zM80.9 321.2h6.8v6.8h-6.8zM94.2 321.5h6.8v6.8h-6.8zM107.6 321.7h6.8v6.8h-6.8zM121.1 322h6.8v6.8h-6.8zM134.6 322.2h6.8v6.8h-6.8zM148.3 322.5h6.8v6.8h-6.8zM162 322.8h6.8v6.8h-6.8zM175.7 323h6.8v6.8h-6.8zM189.6 323.3h6.8v6.8h-6.8zM203.5 323.5h6.8v6.8h-6.8zM217.5 323.8h6.8v6.8h-6.8zM231.6 324.1h6.8v6.8h-6.8zM245.7 324.3h6.8v6.8h-6.8zM260 324.6h6.8v6.8h-6.8zM274.3 324.9h6.8v6.8h-6.8zM288.7 325.1h6.8v6.8h-6.8zM303.1 325.4h6.8v6.8h-6.8zM317.7 325.7h6.8v6.8h-6.8zM332.3 325.9h6.8v6.8h-6.8zM347.1 326.2h6.8v6.8h-6.8zM361.9 326.5h6.8v6.8h-6.8zM39.5 334.1h6.8v6.8h-6.8zM52.7 334.4h6.8v6.8h-6.8zM65.9 334.7h6.8v6.8h-6.8zM79.2 335h6.8v6.8h-6.8zM92.6 335.2h6.8v6.8h-6.8zM106 335.5h6.8v6.8h-6.8zM119.5 335.8h6.8v6.8h-6.8zM133.1 336.1h6.8v6.8h-6.8zM146.8 336.4h6.8v6.8h-6.8zM160.5 336.7h6.8v6.8h-6.8zM174.3 337h6.8v6.8h-6.8zM188.2 337.3h6.8v6.8h-6.8zM202.2 337.6h6.8v6.8h-6.8zM216.2 337.9h6.8v6.8h-6.8zM230.3 338.2h6.8v6.8h-6.8zM244.5 338.5h6.8v6.8h-6.8zM258.8 338.8h6.8v6.8h-6.8zM273.2 339.1h6.8v6.8h-6.8zM287.6 339.4h6.8v6.8h-6.8zM302.1 339.7h6.8v6.8h-6.8zM316.7 340h6.8v6.8h-6.8zM331.4 340.4h6.8v6.8h-6.8zM346.2 340.7h6.8v6.8h-6.8zM361 341h6.8v6.8h-6.8z"/>
</svg>
<div class="abs" style="left:8.80px;top:58.67px;font-family:'Liberation Sans';font-size:9.20px;line-height:normal;font-weight:normal;color:#86da86;white-space:pre;transform:scaleX(0.856);transform-origin:0 0;-webkit-text-stroke:0.12px #86da86;">Name: 1.png</div>
<div class="abs" style="left:8.80px;top:68.57px;font-family:'Liberation Sans';font-size:9.20px;line-height:normal;font-weight:normal;color:#86da86;white-space:pre;transform:scaleX(0.858);transform-origin:0 0;-webkit-text-stroke:0.12px #86da86;">Size: 1440x1080</div>
<div class="abs" style="left:8.80px;top:78.57px;font-family:'Liberation Sans';font-size:9.20px;line-height:normal;font-weight:normal;color:#86da86;white-space:pre;transform:scaleX(0.853);transform-origin:0 0;-webkit-text-stroke:0.12px #86da86;">X: 1329.08 Y: 910.43</div>

<div class="abs" style="left:561px;top:21.5px;width:188px;height:511px;background:#f0f0f0"></div><div class="panel"></div>
<div class="abs" style="left:563.8px;top:22.5px;width:185px;height:20px;background:#f9f9f9"></div>
<svg class="abs" style="left:567.5px;top:28.8px" width="12" height="10"><path d="M0.4 0.5h3.6l1.3 1.5h5.3v7h-10.2z" fill="#e8c894" stroke="#cfa86e" stroke-width="0.5"/><path d="M1 0.8 L3.2 2.6" stroke="#9a6a30" stroke-width="0.6"/><path d="M5.8 6.6h3.4M7.5 4.9v3.4" stroke="#b8702e" stroke-width="1.1"/></svg><svg class="abs" style="left:584.5px;top:28.8px" width="12" height="12"><path d="M0.9 0.5h3.6l1.3 1.5h5.3v7h-10.2z" fill="#e8c894" stroke="#cfa86e" stroke-width="0.5"/><path d="M1.5 0.8 L3.7 2.6" stroke="#9a6a30" stroke-width="0.6"/><path d="M6.2 6.6h3.4M7.9 4.9v3.4" stroke="#b8702e" stroke-width="1.1"/><path d="M0 5.2h4.4M0 7h4.4M0 8.8h4.4M0.4 10.3h3" stroke="#3a8ad6" stroke-width="0.95"/></svg><svg class="abs" style="left:601.8px;top:27.4px" width="12" height="11"><path d="M1 1 L10.6 10 M10.6 1 L1 10" stroke="#ee3a3a" stroke-width="1.7"/></svg>
<div class="sep" style="left:618.5px;top:26px;height:14px;background:#d6d6d6"></div>
<svg class="abs" style="left:723px;top:29px" width="14" height="8"><rect x="0.5" y="0.5" width="5" height="5" fill="#555"/><path d="M7 1.3h6M7 6.3h5" stroke="#555" stroke-width="1.2"/></svg>
<svg class="abs" style="left:742px;top:31px" width="6" height="4"><path d="M0 0.5h5l-2.5 3z" fill="#222"/></svg>
<div class="abs" style="left:563.8px;top:42.5px;width:185px;height:137.8px;background:#fff;border-top:1px solid #d0d0d0"></div>
<div class="abs" style="left:563.5px;top:43px;width:176px;height:136.5px;overflow:hidden">
<div class="abs" style="left:-563.5px;top:-43px;width:750px;height:559px">
<div class="abs" style="left:564px;top:43.3px;width:172px;height:39.2px;background:#a9a9a9;border:1px solid #4a4a4a"></div>
<div class="abs" style="left:566px;top:48px;width:41.3px;height:30px;background:#fff"></div>
<div class="abs" style="left:566px;top:47.8px;width:44px;height:34px"><svg width="44" height="34" style="position:absolute;left:0;top:0"><defs><pattern id="tp0" width="2.4" height="2.4" patternUnits="userSpaceOnUse" patternTransform="rotate(-4)"><rect width="2.4" height="2.4" fill="#d4d4d4"/><rect width="1.2" height="1.2" fill="#444"/><rect x="1.2" y="1.2" width="1.2" height="1.2" fill="#444"/></pattern></defs><path fill="url(#tp0)" d="M2 2 L30 1 L29 20 L1 22 Z"/></svg></div>
<div class="abs" style="left:610.70px;top:46.80px;font-family:'Liberation Sans';font-size:8.40px;line-height:normal;font-weight:bold;color:#111;white-space:pre;">1.png</div>
<div class="abs" style="left:610.00px;top:65.07px;font-family:'Liberation Sans';font-size:9.20px;line-height:normal;font-weight:normal;color:#3c3c4c;white-space:pre;transform:scaleX(0.884);transform-origin:0 0;">Images\Chessboard_Cali</div>
<div class="abs" style="left:610px;top:74.0px;width:92px;height:1px;background:#4a4a5a"></div>
<div class="abs" style="left:702.8px;top:72.4px;width:0.9px;height:0.9px;background:#8a8a9a"></div><div class="abs" style="left:704.4px;top:72.4px;width:0.9px;height:0.9px;background:#8a8a9a"></div><div class="abs" style="left:706.0px;top:72.4px;width:0.9px;height:0.9px;background:#8a8a9a"></div>
<svg width="30" height="26" class="abs" style="left:706px;top:56px"><path d="M6.8 20.5 L17.2 12.4 L29.4 16.7 L18.9 25.3Z" fill="#fafafa" stroke="#d8d8d8" stroke-width="0.4"/><path fill="#111" d="M6.8 20.5 L9.8 21.7 L12.4 19.6 L9.4 18.5ZM12.0 16.4 L15.0 17.6 L17.6 15.5 L14.6 14.4ZM12.4 19.6 L15.5 20.8 L18.1 18.7 L15.0 17.6ZM17.6 15.5 L20.7 16.6 L23.3 14.6 L20.2 13.5ZM12.8 22.9 L15.9 24.1 L18.5 22.0 L15.5 20.8ZM18.1 18.7 L21.1 19.9 L23.7 17.7 L20.7 16.6ZM18.5 22.0 L21.5 23.2 L24.1 21.0 L21.1 19.9ZM23.7 17.7 L26.8 18.8 L29.4 16.7 L26.3 15.6Z"/><path d="M7.7 16 L9.9 20.6 L22.3 4" fill="none" stroke="#0be00b" stroke-width="3.3" stroke-linecap="round" stroke-linejoin="round"/></svg>
<div class="abs" style="left:566px;top:87.8px;width:44px;height:34px"><svg width="44" height="34" style="position:absolute;left:0;top:0"><defs><pattern id="tp1" width="2.4" height="2.4" patternUnits="userSpaceOnUse" patternTransform="rotate(-4)"><rect width="2.4" height="2.4" fill="#d4d4d4"/><rect width="1.2" height="1.2" fill="#444"/><rect x="1.2" y="1.2" width="1.2" height="1.2" fill="#444"/></pattern></defs><path fill="url(#tp1)" d="M11 0 L41 1 L41 20 L10 21 Z"/></svg></div>
<div class="abs" style="left:610.70px;top:86.80px;font-family:'Liberation Sans';font-size:8.40px;line-height:normal;font-weight:bold;color:#111;white-space:pre;">2.png</div>
<div class="abs" style="left:610.00px;top:105.07px;font-family:'Liberation Sans';font-size:9.20px;line-height:normal;font-weight:normal;color:#3c3c4c;white-space:pre;transform:scaleX(0.884);transform-origin:0 0;">Images\Chessboard_Cali</div>
<div class="abs" style="left:610px;top:114.0px;width:92px;height:1px;background:#4a4a5a"></div>
<div class="abs" style="left:702.8px;top:112.4px;width:0.9px;height:0.9px;background:#8a8a9a"></div><div class="abs" style="left:704.4px;top:112.4px;width:0.9px;height:0.9px;background:#8a8a9a"></div><div class="abs" style="left:706.0px;top:112.4px;width:0.9px;height:0.9px;background:#8a8a9a"></div>
<svg width="30" height="26" class="abs" style="left:706px;top:96px"><path d="M6.8 20.5 L17.2 12.4 L29.4 16.7 L18.9 25.3Z" fill="#fafafa" stroke="#d8d8d8" stroke-width="0.4"/><path fill="#111" d="M6.8 20.5 L9.8 21.7 L12.4 19.6 L9.4 18.5ZM12.0 16.4 L15.0 17.6 L17.6 15.5 L14.6 14.4ZM12.4 19.6 L15.5 20.8 L18.1 18.7 L15.0 17.6ZM17.6 15.5 L20.7 16.6 L23.3 14.6 L20.2 13.5ZM12.8 22.9 L15.9 24.1 L18.5 22.0 L15.5 20.8ZM18.1 18.7 L21.1 19.9 L23.7 17.7 L20.7 16.6ZM18.5 22.0 L21.5 23.2 L24.1 21.0 L21.1 19.9ZM23.7 17.7 L26.8 18.8 L29.4 16.7 L26.3 15.6Z"/><path d="M7.7 16 L9.9 20.6 L22.3 4" fill="none" stroke="#0be00b" stroke-width="3.3" stroke-linecap="round" stroke-linejoin="round"/></svg>
<div class="abs" style="left:566px;top:127.8px;width:44px;height:34px"><svg width="44" height="34" style="position:absolute;left:0;top:0"><defs><pattern id="tp2" width="2.4" height="2.4" patternUnits="userSpaceOnUse" patternTransform="rotate(-4)"><rect width="2.4" height="2.4" fill="#d4d4d4"/><rect width="1.2" height="1.2" fill="#444"/><rect x="1.2" y="1.2" width="1.2" height="1.2" fill="#444"/></pattern></defs><path fill="url(#tp2)" d="M1 10 L31 8 L31 29 L0 30 Z"/></svg></div>
<div class="abs" style="left:610.70px;top:126.80px;font-family:'Liberation Sans';font-size:8.40px;line-height:normal;font-weight:bold;color:#111;white-space:pre;">3.png</div>
<div class="abs" style="left:610.00px;top:145.07px;font-family:'Liberation Sans';font-size:9.20px;line-height:normal;font-weight:normal;color:#3c3c4c;white-space:pre;transform:scaleX(0.884);transform-origin:0 0;">Images\Chessboard_Cali</div>
<div class="abs" style="left:610px;top:154.0px;width:92px;height:1px;background:#4a4a5a"></div>
<div class="abs" style="left:702.8px;top:152.4px;width:0.9px;height:0.9px;background:#8a8a9a"></div><div class="abs" style="left:704.4px;top:152.4px;width:0.9px;height:0.9px;background:#8a8a9a"></div><div class="abs" style="left:706.0px;top:152.4px;width:0.9px;height:0.9px;background:#8a8a9a"></div>
<svg width="30" height="26" class="abs" style="left:706px;top:136px"><path d="M6.8 20.5 L17.2 12.4 L29.4 16.7 L18.9 25.3Z" fill="#fafafa" stroke="#d8d8d8" stroke-width="0.4"/><path fill="#111" d="M6.8 20.5 L9.8 21.7 L12.4 19.6 L9.4 18.5ZM12.0 16.4 L15.0 17.6 L17.6 15.5 L14.6 14.4ZM12.4 19.6 L15.5 20.8 L18.1 18.7 L15.0 17.6ZM17.6 15.5 L20.7 16.6 L23.3 14.6 L20.2 13.5ZM12.8 22.9 L15.9 24.1 L18.5 22.0 L15.5 20.8ZM18.1 18.7 L21.1 19.9 L23.7 17.7 L20.7 16.6ZM18.5 22.0 L21.5 23.2 L24.1 21.0 L21.1 19.9ZM23.7 17.7 L26.8 18.8 L29.4 16.7 L26.3 15.6Z"/><path d="M7.7 16 L9.9 20.6 L22.3 4" fill="none" stroke="#0be00b" stroke-width="3.3" stroke-linecap="round" stroke-linejoin="round"/></svg>
<div class="abs" style="left:566px;top:167.8px;width:44px;height:34px"><svg width="44" height="34" style="position:absolute;left:0;top:0"><defs><pattern id="tp3" width="2.4" height="2.4" patternUnits="userSpaceOnUse" patternTransform="rotate(-4)"><rect width="2.4" height="2.4" fill="#d4d4d4"/><rect width="1.2" height="1.2" fill="#444"/><rect x="1.2" y="1.2" width="1.2" height="1.2" fill="#444"/></pattern></defs><path fill="url(#tp3)" d="M11 8 L40 8 L40 14 L11 14 Z"/></svg></div>
<div class="abs" style="left:610.70px;top:166.80px;font-family:'Liberation Sans';font-size:8.40px;line-height:normal;font-weight:bold;color:#111;white-space:pre;">4.png</div>
<svg width="30" height="26" class="abs" style="left:706px;top:176px"><path d="M6.8 20.5 L17.2 12.4 L29.4 16.7 L18.9 25.3Z" fill="#fafafa" stroke="#d8d8d8" stroke-width="0.4"/><path fill="#111" d="M6.8 20.5 L9.8 21.7 L12.4 19.6 L9.4 18.5ZM12.0 16.4 L15.0 17.6 L17.6 15.5 L14.6 14.4ZM12.4 19.6 L15.5 20.8 L18.1 18.7 L15.0 17.6ZM17.6 15.5 L20.7 16.6 L23.3 14.6 L20.2 13.5ZM12.8 22.9 L15.9 24.1 L18.5 22.0 L15.5 20.8ZM18.1 18.7 L21.1 19.9 L23.7 17.7 L20.7 16.6ZM18.5 22.0 L21.5 23.2 L24.1 21.0 L21.1 19.9ZM23.7 17.7 L26.8 18.8 L29.4 16.7 L26.3 15.6Z"/><path d="M7.7 16 L9.9 20.6 L22.3 4" fill="none" stroke="#0be00b" stroke-width="3.3" stroke-linecap="round" stroke-linejoin="round"/></svg>
</div></div>
<div class="abs" style="left:737.6px;top:43.5px;width:11px;height:136.5px;background:#f4f4f4"></div><div class="abs" style="left:742px;top:54.5px;width:1.4px;height:56px;background:#8a8a8a;border-radius:1px"></div>

<div class="abs" style="left:565.7px;top:184.2px;width:45.7px;height:14.6px;background:#f0f0f0;border:1px solid #e2e2e2;border-bottom:none"></div>
<div class="abs" style="left:569.80px;top:187.13px;font-family:'Liberation Sans';font-size:8.70px;line-height:normal;font-weight:normal;color:#1a1a1a;white-space:pre;transform:scaleX(0.830);transform-origin:0 0;">Parameters</div>
<div class="abs" style="left:611.2px;top:182.8px;width:75.6px;height:16.2px;background:#f9f9f9;border:1px solid #dcdcdc;border-bottom:none"></div>
<div class="abs" style="left:619.70px;top:185.64px;font-family:'Liberation Sans';font-size:8.80px;line-height:normal;font-weight:normal;color:#1a1a1a;white-space:pre;transform:scaleX(0.844);transform-origin:0 0;">Results &amp; Statistics</div>
<div class="abs" style="left:564px;top:198.5px;width:183.5px;height:329px;background:#f9f9f9;border:1px solid #e0e0e0;border-bottom:none"></div>
<div class="abs" style="left:568.6px;top:202.3px;width:174.8px;height:324px;background:#f0f0f0;border:1px solid #e6e6e6"></div>
<div class="abs" style="left:568.5px;top:525px;width:176px;height:1.6px;background:#1a6fc8"></div>
<div class="abs" style="left:730.4px;top:203.3px;width:1px;height:321.7px;background:#fbfbfb"></div><svg class="abs" style="left:733.5px;top:206.5px" width="8" height="6"><path d="M0.5 5h6l-3-4z" fill="#a8a8a8"/></svg>
<svg class="abs" style="left:733.5px;top:517.5px" width="8" height="6"><path d="M0.5 0.5h6l-3 4z" fill="#a8a8a8"/></svg>
<div class="abs" style="left:572.7px;top:203.6px;width:1px;height:9.2px;background:#111"></div>
<pre class="report">Reprojection Error
----------------------
Average (RMS):     0.10 [px]
Maximal:           0.28 [px]


Camera Parameters
----------------------
Type: PinholeCameraModel

                    Value  StdDev
Focal Length:      3667.50   5.98
Distort. Center X:  757.62   3.21
Distort. Center Y:  603.01   2.85


Lens Distortion
----------------------
                Value     StdDev
K1:             -17.4e-2  10.7e-3
K2:              29.8e-1  50.4e-2
P1:             -16.4e-4  17.3e-5
P2:             -11.7e-4  22.0e-5
K3:              -32.4e0  69.4e-1
K4:               00.0e0   00.0e0
K5:               00.0e0   00.0e0
K6:               00.0e0   00.0e0

Tip: Standard deviations of model
parameters are calculated assuming
that calibration grid points
positions have a standard deviation
of 0.1 px.</pre>

<div class="abs" style="left:1px;top:532px;width:748px;height:26px;background:#f0f0f0;border-radius:0 0 6px 6px"></div>
<svg class="abs" style="left:6px;top:537px" width="12" height="12"><circle cx="5.6" cy="5.2" r="5.2" fill="#2a8ad8"/><text x="5.6" y="9" font-size="9" font-weight="bold" text-anchor="middle" font-family="Liberation Sans" fill="#fff">?</text></svg>
<div class="btn" style="left:622.4px;width:57px"></div>
<div class="abs" style="left:644.40px;top:537.86px;font-family:'Liberation Sans';font-size:9.00px;line-height:normal;font-weight:normal;color:#1a1a1a;white-space:pre;transform:scaleX(0.861);transform-origin:0 0;">OK</div>
<div class="btn" style="left:685.6px;width:57px"></div>
<div class="abs" style="left:701.00px;top:537.86px;font-family:'Liberation Sans';font-size:9.00px;line-height:normal;font-weight:normal;color:#1a1a1a;white-space:pre;transform:scaleX(0.857);transform-origin:0 0;">Cancel</div>
<div class="abs" style="left:0;top:0;width:750px;height:559px;border:1px solid #3b3b3b;border-radius:7px;pointer-events:none"></div>

</body></html>
